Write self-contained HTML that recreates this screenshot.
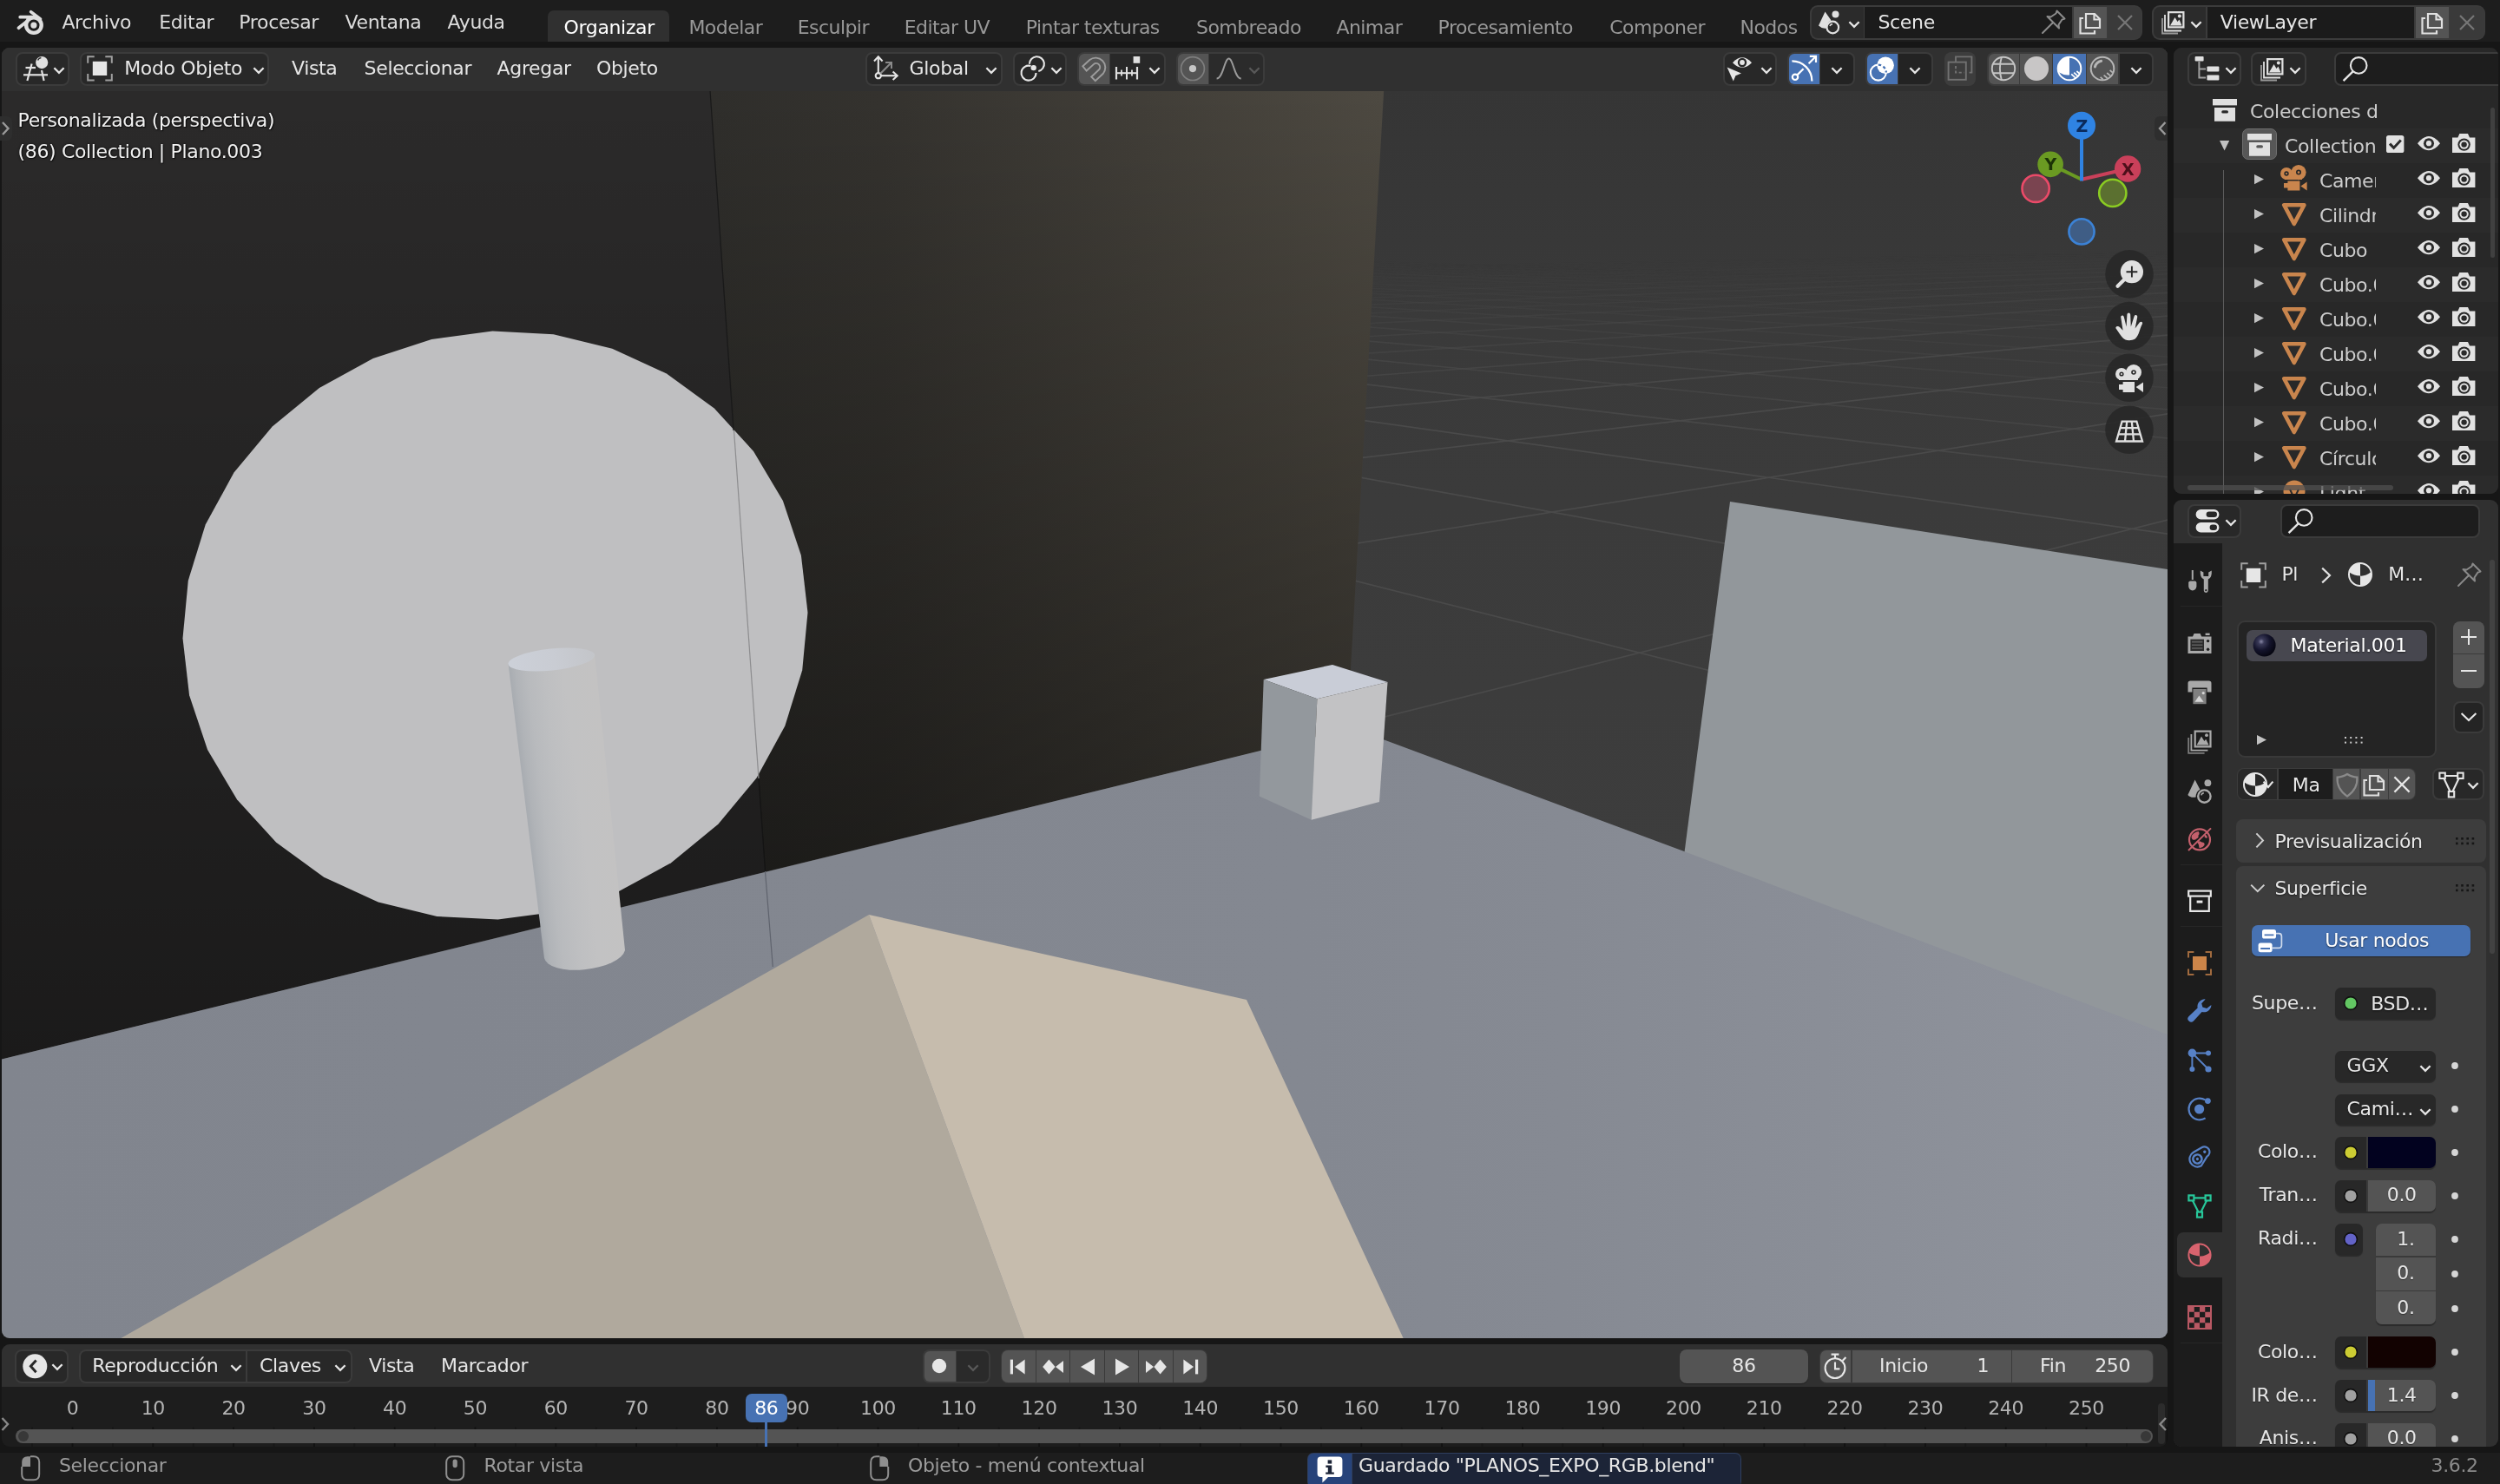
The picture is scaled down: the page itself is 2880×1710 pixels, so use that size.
<!DOCTYPE html>
<html lang="es"><head><meta charset="utf-8"><title>Blender</title>
<style>

html,body{margin:0;padding:0;}
body{width:2880px;height:1710px;overflow:hidden;background:#161616;position:relative;
 font-family:"DejaVu Sans","Liberation Sans",sans-serif;font-size:22px;color:#e6e6e6;letter-spacing:-0.35px;}
#root{position:absolute;left:0;top:0;width:2880px;height:1710px;overflow:hidden;will-change:transform;}
.abs{position:absolute;}
.t{position:absolute;white-space:nowrap;line-height:26px;height:26px;}
.btn{position:absolute;box-sizing:border-box;background:#282828;border:1px solid #3d3d3d;border-radius:8px;}
svg{position:absolute;overflow:visible;}

#topbar{position:absolute;left:0;top:0;width:2880px;height:48px;background:#1d1d1d;}
.menu{color:#dcdcdc;}
.ws{color:#989898;letter-spacing:-0.55px;}

#vp{position:absolute;left:2px;top:55px;width:2495px;height:1487px;border-radius:9px;overflow:hidden;background:#3a3a3a;}

#vhead{position:absolute;left:2px;top:55px;width:2495px;height:50px;background:#303030;border-radius:9px 9px 0 0;}

.ovt{color:#f2f2f2;text-shadow:0 0 3px rgba(0,0,0,.75),1px 1px 1px rgba(0,0,0,.6);}
.gz{font-family:"DejaVu Sans","Liberation Sans",sans-serif;font-weight:bold;font-size:19px;text-anchor:middle;}

#outl{position:absolute;left:2504px;top:55px;width:374px;height:514px;border-radius:9px;overflow:hidden;background:#282828;}
#outl .row{position:absolute;left:0;width:374px;height:40px;}
#outl .nm{position:absolute;white-space:nowrap;line-height:26px;height:30px;overflow:hidden;color:#cdcdcd;}

#props{position:absolute;left:2504px;top:576px;width:374px;height:1091px;border-radius:9px;overflow:hidden;background:#303030;}
#props .lbl{position:absolute;white-space:nowrap;line-height:26px;height:26px;text-align:right;width:120px;color:#e6e6e6;text-shadow:0 1px 1px rgba(0,0,0,.5);}
#props .val{position:absolute;white-space:nowrap;line-height:26px;height:26px;text-align:center;color:#e6e6e6;text-shadow:0 1px 1px rgba(0,0,0,.45);}
#props .pt{text-shadow:0 1px 2px rgba(0,0,0,.6);}

#tl{position:absolute;left:2px;top:1549px;width:2495px;height:118px;border-radius:9px;overflow:hidden;background:#1d1d1d;}
#tlh{position:absolute;left:0;top:0;width:2495px;height:49px;background:#303030;}
.num{position:absolute;white-space:nowrap;line-height:26px;height:26px;width:80px;text-align:center;color:#b4b4b4;}

#sb{position:absolute;left:0;top:1674px;width:2880px;height:36px;background:#1d1d1d;}
.st{color:#9b9b9b;}

</style></head>
<body>
<div id="root">
<div id="topbar"></div>
<svg style="left:16px;top:8px;" width="36" height="34" viewBox="0 0 36 34"><g fill="none" stroke="#dedede" stroke-width="3.7" stroke-linecap="round"><path d="M7.2,11.7 L21,11.7"/><path d="M19.6,5.6 L30.5,14"/><path d="M5.4,24.2 L15,16.6"/></g><polygon points="14,11.7 22,10 28,12 16,20" fill="#dedede"/><circle cx="22.9" cy="21.05" r="11" fill="#dedede"/><circle cx="22.9" cy="21.05" r="6.6" fill="#1d1d1d"/><circle cx="22.9" cy="21.05" r="3.6" fill="#dedede"/></svg>
<div class="t menu" style="left:71.4px;top:13px;">Archivo</div>
<div class="t menu" style="left:183.2px;top:13px;">Editar</div>
<div class="t menu" style="left:275.3px;top:13px;">Procesar</div>
<div class="t menu" style="left:397.5px;top:13px;">Ventana</div>
<div class="t menu" style="left:515.5px;top:13px;">Ayuda</div>
<div class="abs" style="left:631px;top:12px;width:140px;height:36px;background:#303030;border-radius:7px 7px 0 0;"></div>
<div class="t" style="left:649.5px;top:19px;color:#ffffff;">Organizar</div>
<div class="t ws" style="left:793.4px;top:19px;">Modelar</div>
<div class="t ws" style="left:918.7px;top:19px;">Esculpir</div>
<div class="t ws" style="left:1041.7px;top:19px;">Editar UV</div>
<div class="t ws" style="left:1181.7px;top:19px;">Pintar texturas</div>
<div class="t ws" style="left:1378.0px;top:19px;">Sombreado</div>
<div class="t ws" style="left:1539.4px;top:19px;">Animar</div>
<div class="t ws" style="left:1656.6px;top:19px;">Procesamiento</div>
<div class="t ws" style="left:1854.2px;top:19px;">Componer</div>
<div class="t ws" style="left:2004.5px;top:19px;">Nodos</div>
<div class="abs" style="left:2072px;top:0px;width:808px;height:48px;background:#1d1d1d;"></div>
<div class="abs" style="left:2085px;top:6px;width:383px;height:40px;background:#3b3b3b;border-radius:9px;"></div>
<div class="abs" style="left:2087px;top:8px;width:60px;height:36px;background:#2b2b2b;border-radius:7px 0 0 7px;"></div>
<div class="abs" style="left:2148px;top:8px;width:239px;height:36px;background:#1b1b1b;"></div>
<div class="abs" style="left:2389px;top:8px;width:38px;height:36px;background:#545454;"></div>
<div class="abs" style="left:2428px;top:8px;width:38px;height:36px;background:#3a3a3a;border-radius:0 7px 7px 0;"></div>
<svg style="left:2093px;top:10px;" width="32" height="32" viewBox="0 0 32 32"><path d="M9.5,3.5 L2,19.5 Q6,23.5 11.5,22.5 Q11,16 16.5,13.5 Z" fill="#e0e0e0"/><circle cx="21.5" cy="6.5" r="4" fill="#e0e0e0"/><circle cx="18.3" cy="21.5" r="6.8" fill="none" stroke="#e0e0e0" stroke-width="2.2"/><path d="M15,20 A3.6,3.6 0 0 1 18,17.6" fill="none" stroke="#e0e0e0" stroke-width="1.6"/></svg>
<svg style="left:2123.6px;top:16px;" width="24" height="24" viewBox="0 0 24 24"><path d="M6.4,9.2 L12,14.8 L17.6,9.2" fill="none" stroke="#e6e6e6" stroke-width="2.3" stroke-linecap="butt" stroke-linejoin="miter"/></svg>
<div class="t" style="left:2163.5px;top:13px;color:#e6e6e6;">Scene</div>
<svg style="left:2392px;top:10px;" width="32" height="32" viewBox="0 0 32 32"><g fill="none" stroke="#e0e0e0" stroke-width="2.2" stroke-linejoin="miter"><path d="M11,6 L21,6 L27,12 L27,22 L11,22 Z"/><path d="M20.5,6 L20.5,12.5 L27,12.5" /><path d="M8,11 L4.5,11 L4.5,28.5 L21,28.5 L21,25"/></g></svg>
<svg style="left:2432px;top:10px;" width="32" height="32" viewBox="0 0 32 32"><path d="M8,8 L24,24 M24,8 L8,24" stroke="#767676" stroke-width="2.2" fill="none"/></svg>
<svg style="left:2350px;top:9px;" width="32" height="32" viewBox="0 0 32 32"><g fill="none" stroke="#8c8c8c" stroke-width="2" stroke-linejoin="round" stroke-linecap="round"><path d="M19.5,3.5 L28.5,12.5 L25.5,13.5 L21.5,19.5 L22,23.5 L8.5,10 L12.5,10.5 L18.5,6.5 Z"/><path d="M14.5,17.5 L3,29"/></g></svg>
<div class="abs" style="left:2479px;top:6px;width:384px;height:40px;background:#3b3b3b;border-radius:9px;"></div>
<div class="abs" style="left:2481px;top:8px;width:60px;height:36px;background:#2b2b2b;border-radius:7px 0 0 7px;"></div>
<div class="abs" style="left:2543px;top:8px;width:238px;height:36px;background:#1b1b1b;"></div>
<div class="abs" style="left:2783px;top:8px;width:38px;height:36px;background:#545454;"></div>
<div class="abs" style="left:2822px;top:8px;width:39px;height:36px;background:#3a3a3a;border-radius:0 7px 7px 0;"></div>
<svg style="left:2488px;top:9.5px;" width="32" height="32" viewBox="0 0 32 32"><path d="M9,3 H28.5 V22.5 H9 Z M11.2,5.2 V20.3 H26.3 V5.2 Z" fill="#e0e0e0" fill-rule="evenodd"/><path d="M12,19.5 L17.5,10 L20.5,15 L22.5,12.5 L25.5,19.5 Z" fill="#e0e0e0"/><circle cx="22.8" cy="8.5" r="2" fill="#e0e0e0"/><path d="M6,7 V25.5 H25" fill="none" stroke="#e0e0e0" stroke-width="1.8"/><path d="M3,11 V28.5 H21" fill="none" stroke="#9a9a9a" stroke-width="1.8"/></svg>
<svg style="left:2517.8px;top:16px;" width="24" height="24" viewBox="0 0 24 24"><path d="M6.4,9.2 L12,14.8 L17.6,9.2" fill="none" stroke="#e6e6e6" stroke-width="2.3" stroke-linecap="butt" stroke-linejoin="miter"/></svg>
<div class="t" style="left:2557.7px;top:13px;color:#e6e6e6;">ViewLayer</div>
<svg style="left:2786px;top:10px;" width="32" height="32" viewBox="0 0 32 32"><g fill="none" stroke="#e0e0e0" stroke-width="2.2" stroke-linejoin="miter"><path d="M11,6 L21,6 L27,12 L27,22 L11,22 Z"/><path d="M20.5,6 L20.5,12.5 L27,12.5" /><path d="M8,11 L4.5,11 L4.5,28.5 L21,28.5 L21,25"/></g></svg>
<svg style="left:2826px;top:10px;" width="32" height="32" viewBox="0 0 32 32"><path d="M8,8 L24,24 M24,8 L8,24" stroke="#767676" stroke-width="2.2" fill="none"/></svg>

<div id="vp">
<svg style="left:-2px;top:-55px" width="2880" height="1710" viewBox="0 0 2880 1710">
<defs>
 <linearGradient id="gbg" gradientUnits="userSpaceOnUse" x1="0" y1="100" x2="0" y2="1000">
  <stop offset="0" stop-color="#353535"/><stop offset="0.2" stop-color="#383838"/><stop offset="0.3" stop-color="#3a3a3a"/><stop offset="1" stop-color="#3d3d3d"/>
 </linearGradient>
 <linearGradient id="gwall" gradientUnits="userSpaceOnUse" x1="820" y1="0" x2="1595" y2="0">
  <stop offset="0" stop-color="#2f2e2b"/><stop offset="0.25" stop-color="#34322e"/><stop offset="1" stop-color="#4d4941"/>
 </linearGradient>
 <linearGradient id="gwall2" gradientUnits="userSpaceOnUse" x1="0" y1="105" x2="0" y2="1220">
  <stop offset="0" stop-color="#000" stop-opacity="0"/><stop offset="1" stop-color="#000" stop-opacity="0.38"/>
 </linearGradient>
 <linearGradient id="gwall3" gradientUnits="userSpaceOnUse" x1="0" y1="105" x2="0" y2="1005">
  <stop offset="0" stop-color="#000" stop-opacity="0"/><stop offset="1" stop-color="#000" stop-opacity="0.43"/>
 </linearGradient>
 <linearGradient id="gfloor" gradientUnits="userSpaceOnUse" x1="0" y1="0" x2="2500" y2="0">
  <stop offset="0" stop-color="#81858e"/><stop offset="0.6" stop-color="#848891"/><stop offset="0.72" stop-color="#868a93"/><stop offset="0.96" stop-color="#8e929b"/><stop offset="1" stop-color="#8f939c"/>
 </linearGradient>
 <linearGradient id="gcyl" gradientUnits="userSpaceOnUse" x1="585.5" y1="765" x2="684.8" y2="752.8">
  <stop offset="0" stop-color="#a8acb1"/><stop offset="0.07" stop-color="#b0b3b7"/><stop offset="0.2" stop-color="#b8babd"/><stop offset="0.4" stop-color="#bebfc1"/><stop offset="0.62" stop-color="#c2c2c3"/><stop offset="1" stop-color="#c3c2c2"/>
 </linearGradient>
 <linearGradient id="gcyt" gradientUnits="userSpaceOnUse" x1="590" y1="760" x2="685" y2="752">
  <stop offset="0" stop-color="#ccd0d8"/><stop offset="0.5" stop-color="#c9ccd3"/><stop offset="1" stop-color="#c3c5c9"/>
 </linearGradient>
</defs>
<rect x="0" y="55" width="2500" height="1490" fill="url(#gbg)"/>
<g id="grid" stroke="#4a4a4a" stroke-width="1.7" fill="none"><line x1="1500" y1="850.0" x2="2500" y2="598.4" stroke-opacity="1.00"/><line x1="1500" y1="636.1" x2="2500" y2="476.5" stroke-opacity="1.00"/><line x1="1500" y1="535.5" x2="2500" y2="419.2" stroke-opacity="1.00"/><line x1="1500" y1="477.0" x2="2500" y2="385.8" stroke-opacity="0.89"/><line x1="1500" y1="438.8" x2="2500" y2="364.0" stroke-opacity="0.68"/><line x1="1500" y1="411.8" x2="2500" y2="348.7" stroke-opacity="0.53"/><line x1="1500" y1="391.8" x2="2500" y2="337.3" stroke-opacity="0.43"/><line x1="1500" y1="376.3" x2="2500" y2="328.5" stroke-opacity="0.35"/><line x1="1500" y1="364.1" x2="2500" y2="321.5" stroke-opacity="0.29"/><line x1="1500" y1="354.0" x2="2500" y2="315.7" stroke-opacity="0.24"/><line x1="1500" y1="345.7" x2="2500" y2="311.0" stroke-opacity="0.20"/><line x1="1500" y1="338.7" x2="2500" y2="307.0" stroke-opacity="0.16"/><line x1="1500" y1="332.7" x2="2500" y2="303.6" stroke-opacity="0.14"/><line x1="1500" y1="327.5" x2="2500" y2="300.6" stroke-opacity="0.11"/><line x1="1500" y1="323.0" x2="2500" y2="298.1" stroke-opacity="0.09"/><line x1="1500" y1="319.0" x2="2500" y2="295.8" stroke-opacity="0.07"/><line x1="1500" y1="315.5" x2="2500" y2="293.8" stroke-opacity="0.06"/><line x1="1500" y1="312.3" x2="2500" y2="292.0" stroke-opacity="0.04"/><line x1="1500" y1="309.5" x2="2500" y2="290.4" stroke-opacity="0.03"/><line x1="1500" y1="653.7" x2="2500" y2="907.1" stroke-opacity="1.00"/><line x1="1500" y1="538.1" x2="2500" y2="718.9" stroke-opacity="1.00"/><line x1="1500" y1="474.5" x2="2500" y2="615.5" stroke-opacity="1.00"/><line x1="1500" y1="434.4" x2="2500" y2="550.1" stroke-opacity="0.87"/><line x1="1500" y1="406.7" x2="2500" y2="505.1" stroke-opacity="0.68"/><line x1="1500" y1="386.5" x2="2500" y2="472.1" stroke-opacity="0.55"/><line x1="1500" y1="371.0" x2="2500" y2="447.0" stroke-opacity="0.45"/><line x1="1500" y1="358.8" x2="2500" y2="427.2" stroke-opacity="0.38"/><line x1="1500" y1="349.0" x2="2500" y2="411.2" stroke-opacity="0.32"/><line x1="1500" y1="340.9" x2="2500" y2="397.9" stroke-opacity="0.27"/><line x1="1500" y1="334.1" x2="2500" y2="386.8" stroke-opacity="0.23"/><line x1="1500" y1="328.3" x2="2500" y2="377.4" stroke-opacity="0.19"/><line x1="1500" y1="323.3" x2="2500" y2="369.3" stroke-opacity="0.16"/><line x1="1500" y1="318.9" x2="2500" y2="362.2" stroke-opacity="0.14"/><line x1="1500" y1="315.1" x2="2500" y2="356.0" stroke-opacity="0.12"/><line x1="1500" y1="311.7" x2="2500" y2="350.5" stroke-opacity="0.10"/><line x1="1500" y1="308.7" x2="2500" y2="345.6" stroke-opacity="0.08"/><line x1="1500" y1="306.0" x2="2500" y2="341.2" stroke-opacity="0.07"/><line x1="1500" y1="303.6" x2="2500" y2="337.2" stroke-opacity="0.05"/><line x1="1500" y1="301.4" x2="2500" y2="333.6" stroke-opacity="0.04"/><line x1="1500" y1="299.3" x2="2500" y2="330.3" stroke-opacity="0.03"/></g>
<!-- wall -->
<polygon points="0,55 815,55 882,1004.5 0,1221" fill="#2b2a2a"/>
<polygon points="814.5,55 1597,55 1552,841 881.5,1004.6" fill="url(#gwall)"/>
<polygon points="0,55 815,55 882,1004.5 0,1221" fill="url(#gwall2)"/>
<polygon points="814.5,55 1597,55 1552,841 881.5,1004.6" fill="url(#gwall3)"/>
<!-- right plane -->
<polygon points="1993,578 2500,656.5 2500,1200 1940,986" fill="#92979b"/>
<!-- floor -->
<polygon points="0,1221 1552,840.5 1552,837 1596,853 1940,981 2500,1193.2 2500,1545 0,1545" fill="url(#gfloor)"/>
<!-- disc -->
<polygon points="567.4,381.6 637.6,385.2 705.3,401.7 767.9,430.5 822.8,470.4 868.0,519.9 901.9,577.1 922.9,639.9 930.5,705.7 924.2,772.2 904.3,836.6 871.5,896.6 827.3,949.8 773.1,994.2 711.2,1028.1 643.8,1050.2 573.6,1059.6 503.4,1056.0 435.7,1039.5 373.1,1010.7 318.2,970.8 273.0,921.3 239.1,864.1 218.1,801.3 210.5,735.5 216.8,669.0 236.7,604.6 269.5,544.6 313.7,491.4 367.9,447.0 429.8,413.1 497.2,391.0" fill="#bfbfc1"/>
<!-- thin line -->
<line x1="818" y1="104" x2="845" y2="496" stroke="#191919" stroke-width="1.2"/>
<line x1="845.5" y1="496" x2="874" y2="897" stroke="#8d8d8f" stroke-width="1.2"/>
<line x1="874" y1="897" x2="881.5" y2="1004" stroke="#141414" stroke-width="1.2"/>
<line x1="881.5" y1="1004" x2="890.3" y2="1114" stroke="#5f636d" stroke-width="1.2"/>
<!-- cylinder -->
<path d="M585.5,765 L627,1104 A47,19.5 -7 0 0 720,1095 L685.2,755 Z" fill="url(#gcyl)"/>
<ellipse cx="635.4" cy="760" rx="50.2" ry="12.5" fill="url(#gcyt)" transform="rotate(-6 635.4 760)"/>
<!-- pyramid -->
<polygon points="1001,1054 134,1545 1181,1545" fill="#b0a99d"/>
<polygon points="1001,1054 1436,1152 1618,1545 1181,1545" fill="#c6bcad"/>
<!-- cube -->
<polygon points="1455.7,783 1535,766 1598.5,786 1517.4,805.3" fill="#c9cdd7"/>
<polygon points="1455.7,783 1517.4,805.3 1510.7,944.8 1450.8,917.6" fill="#93989d"/>
<polygon points="1517.4,805.3 1598.5,786 1589,924 1510.7,944.8" fill="#c2c2c4"/>
</svg>
</div>
<div id="vhead"></div>
<div class="abs" style="left:18px;top:60px;width:62px;height:39px;background:#282828;border:2px solid #3b3b3b;box-sizing:border-box;border-radius:8px;"></div>
<svg style="left:18px;top:60px;" width="40" height="40" viewBox="0 0 40 40"><circle cx="30.2" cy="12.1" r="7.1" fill="#e0e0e0"/><path d="M25.6,9.6 A4.6,4.6 0 0 1 29.4,6.6" fill="none" stroke="#282828" stroke-width="1.4"/><g stroke="#e0e0e0" stroke-width="2.2" fill="none"><path d="M9,26.3 H37"/><path d="M11.5,18 H23"/><path d="M18.6,13.5 L13.4,33"/><path d="M30,21 L32.6,33"/></g></svg>
<svg style="left:55.5px;top:69px;" width="24" height="24" viewBox="0 0 24 24"><path d="M6.4,9.2 L12,14.8 L17.6,9.2" fill="none" stroke="#e6e6e6" stroke-width="2.3" stroke-linecap="butt" stroke-linejoin="miter"/></svg>
<div class="abs" style="left:92px;top:60px;width:218px;height:39px;background:#282828;border:2px solid #3b3b3b;box-sizing:border-box;border-radius:8px;"></div>
<svg style="left:100px;top:64px;" width="30" height="30" viewBox="0 0 30 30"><path d="M1.2,8.7 V1.2 H8.7 M21.3,1.2 H28.8 V8.7 M28.8,21.1 V28.6 H21.3 M8.7,28.6 H1.2 V21.1" fill="none" stroke="#a0a0a0" stroke-width="2"/><rect x="6.8" y="6.8" width="16.4" height="16.2" fill="#e6e6e6"/></svg>
<div class="t" style="left:143.2px;top:66px;">Modo Objeto</div>
<svg style="left:285.8px;top:69px;" width="24" height="24" viewBox="0 0 24 24"><path d="M6.4,9.2 L12,14.8 L17.6,9.2" fill="none" stroke="#e6e6e6" stroke-width="2.3" stroke-linecap="butt" stroke-linejoin="miter"/></svg>
<div class="t" style="left:336.0px;top:66px;">Vista</div>
<div class="t" style="left:419.6px;top:66px;">Seleccionar</div>
<div class="t" style="left:572.6px;top:66px;">Agregar</div>
<div class="t" style="left:687.0px;top:66px;">Objeto</div>
<div class="abs" style="left:997px;top:60px;width:158px;height:39px;background:#282828;border:2px solid #3b3b3b;box-sizing:border-box;border-radius:8px;"></div>
<svg style="left:1004px;top:63px;" width="32" height="32" viewBox="0 0 32 32"><g fill="none" stroke="#e6e6e6" stroke-width="2.1" stroke-linejoin="miter"><circle cx="7.8" cy="24.2" r="3.1"/><path d="M7.8,21 V2.5"/><path d="M3,7.5 L7.8,2.4 L12.6,7.5"/><path d="M11,24.2 H29.5"/><path d="M24.6,19.4 L29.7,24.2 L24.6,29"/></g><g fill="none" stroke="#8a8a8a" stroke-width="2"><path d="M10.2,21.8 L22.5,9.5"/><path d="M16,9 H23 V16"/></g></svg>
<div class="t" style="left:1047.6px;top:66px;">Global</div>
<svg style="left:1130.4px;top:69px;" width="24" height="24" viewBox="0 0 24 24"><path d="M6.4,9.2 L12,14.8 L17.6,9.2" fill="none" stroke="#e6e6e6" stroke-width="2.3" stroke-linecap="butt" stroke-linejoin="miter"/></svg>
<div class="abs" style="left:1167px;top:60px;width:62px;height:39px;background:#282828;border:2px solid #3b3b3b;box-sizing:border-box;border-radius:8px;"></div>
<svg style="left:1174px;top:63px;" width="32" height="32" viewBox="0 0 32 32"><g fill="none" stroke="#e6e6e6" stroke-width="2.1"><path d="M11.9,10.7 A8.5,8.5 0 1 1 22.3,19"/><path d="M19.5,21.1 A8.5,8.5 0 1 1 13.5,13"/></g><circle cx="16.7" cy="15.1" r="3.2" fill="#e6e6e6"/></svg>
<svg style="left:1204.5px;top:69px;" width="24" height="24" viewBox="0 0 24 24"><path d="M6.4,9.2 L12,14.8 L17.6,9.2" fill="none" stroke="#e6e6e6" stroke-width="2.3" stroke-linecap="butt" stroke-linejoin="miter"/></svg>
<div class="abs" style="left:1241px;top:60px;width:102px;height:39px;background:#3b3b3b;border-radius:8px;"></div>
<div class="abs" style="left:1243px;top:62px;width:35px;height:35px;background:#545454;border-radius:6px 0 0 6px;"></div>
<div class="abs" style="left:1279px;top:62px;width:62px;height:35px;background:#282828;border-radius:0 6px 6px 0;"></div>
<svg style="left:1244px;top:63px;" width="32" height="32" viewBox="0 0 32 32"><path transform="translate(0.6,2.6) scale(0.93)" d="M3,11.5 L11.5,3.6 A12,12 0 0 1 28.2,20.6 L18.5,29.6 L13.6,24.6 L22.8,16 A4.6,4.6 0 0 0 16.4,9.2 L7.6,17.2 Z" fill="none" stroke="#9c9c9c" stroke-width="2.1" stroke-linejoin="miter"/></svg>
<svg style="left:1284px;top:63px;" width="32" height="32" viewBox="0 0 32 32"><rect x="21.6" y="2" width="7.6" height="7.8" fill="#e0e0e0"/><g stroke="#e0e0e0" fill="none"><path d="M1,21.2 H27" stroke-width="2"/><path d="M2,14 V28.5 M26,14 V28.5" stroke-width="2.2"/><path d="M14,14 V28.5" stroke-width="2"/><path d="M8,17.5 V24.5 M20,17.5 V24.5" stroke-width="1.8"/></g></svg>
<svg style="left:1318.4px;top:69px;" width="24" height="24" viewBox="0 0 24 24"><path d="M6.4,9.2 L12,14.8 L17.6,9.2" fill="none" stroke="#e6e6e6" stroke-width="2.3" stroke-linecap="butt" stroke-linejoin="miter"/></svg>
<div class="abs" style="left:1355px;top:60px;width:102px;height:39px;background:#3b3b3b;border-radius:8px;"></div>
<div class="abs" style="left:1357px;top:62px;width:35px;height:35px;background:#545454;border-radius:6px 0 0 6px;"></div>
<div class="abs" style="left:1393px;top:62px;width:62px;height:35px;background:#2b2b2b;border-radius:0 6px 6px 0;"></div>
<svg style="left:1358px;top:63px;" width="32" height="32" viewBox="0 0 32 32"><circle cx="16" cy="16.1" r="13.4" fill="none" stroke="#7e7e7e" stroke-width="1.7"/><circle cx="16" cy="16.1" r="4.1" fill="#c6c6c6"/></svg>
<svg style="left:1400px;top:63px;" width="32" height="32" viewBox="0 0 32 32"><path d="M1.6,27.6 C9,27.6 10.5,4.6 15.6,4.6 C20.7,4.6 22.2,27.6 29.7,27.6" fill="none" stroke="#9a9a9a" stroke-width="2"/></svg>
<svg style="left:1432.8px;top:69px;" width="24" height="24" viewBox="0 0 24 24"><path d="M6.4,9.2 L12,14.8 L17.6,9.2" fill="none" stroke="#585858" stroke-width="2.3" stroke-linecap="butt" stroke-linejoin="miter"/></svg>
<div class="abs" style="left:1985px;top:60px;width:62px;height:39px;background:#282828;border:2px solid #3b3b3b;box-sizing:border-box;border-radius:8px;"></div>
<svg style="left:1986px;top:62px;" width="34" height="34" viewBox="0 0 34 34"><path d="M10,10.2 Q21,-1.5 32,10.2 Q21,21.5 10,10.2 Z" fill="#e6e6e6"/><circle cx="21" cy="10" r="5.2" fill="#282828"/><circle cx="21" cy="10" r="2.9" fill="#e6e6e6"/><path d="M3.6,15.4 L20,22.6 L13.4,25.2 L10.8,31.4 Z" fill="#e6e6e6"/></svg>
<svg style="left:2022.5px;top:69px;" width="24" height="24" viewBox="0 0 24 24"><path d="M6.4,9.2 L12,14.8 L17.6,9.2" fill="none" stroke="#e6e6e6" stroke-width="2.3" stroke-linecap="butt" stroke-linejoin="miter"/></svg>
<div class="abs" style="left:2059px;top:60px;width:78px;height:39px;background:#3b3b3b;border-radius:8px;"></div>
<div class="abs" style="left:2061px;top:62px;width:35px;height:35px;background:#4772b3;border-radius:6px 0 0 6px;"></div>
<div class="abs" style="left:2097px;top:62px;width:38px;height:35px;background:#232323;border-radius:0 6px 6px 0;"></div>
<svg style="left:2060px;top:60px;" width="38" height="38" viewBox="0 0 38 38"><g fill="none" stroke="#ffffff" stroke-width="2.2"><path d="M4.4,10.4 A23,23 0 0 1 27.4,33.4"/><circle cx="8" cy="28.8" r="3.2"/><path d="M10.4,26.4 L17.6,19.2"/><path d="M23.6,13.2 L31.6,5.2"/><path d="M24.8,4.8 H32 V12"/></g></svg>
<svg style="left:2104.2px;top:69px;" width="24" height="24" viewBox="0 0 24 24"><path d="M6.4,9.2 L12,14.8 L17.6,9.2" fill="none" stroke="#e6e6e6" stroke-width="2.3" stroke-linecap="butt" stroke-linejoin="miter"/></svg>
<div class="abs" style="left:2149px;top:60px;width:78px;height:39px;background:#3b3b3b;border-radius:8px;"></div>
<div class="abs" style="left:2151px;top:62px;width:35px;height:35px;background:#4772b3;border-radius:6px 0 0 6px;"></div>
<div class="abs" style="left:2187px;top:62px;width:38px;height:35px;background:#232323;border-radius:0 6px 6px 0;"></div>
<svg style="left:2150px;top:60px;" width="38" height="38" viewBox="0 0 38 38"><circle cx="22.1" cy="15.3" r="9.8" fill="#ffffff"/><circle cx="13.8" cy="23.6" r="9" fill="none" stroke="#ffffff" stroke-width="2.1"/><path d="M13.8,14.6 A9,9 0 0 1 22.8,23.6" fill="none" stroke="#4772b3" stroke-width="2.3" stroke-dasharray="3.4 2.6"/></svg>
<svg style="left:2194.2px;top:69px;" width="24" height="24" viewBox="0 0 24 24"><path d="M6.4,9.2 L12,14.8 L17.6,9.2" fill="none" stroke="#e6e6e6" stroke-width="2.3" stroke-linecap="butt" stroke-linejoin="miter"/></svg>
<div class="abs" style="left:2240px;top:60px;width:36px;height:39px;background:#3d3d3d;border-radius:8px;"></div>
<svg style="left:2242px;top:62px;" width="32" height="36" viewBox="0 0 32 36"><g fill="none" stroke="#717171" stroke-width="1.9"><rect x="2.6" y="9.6" width="20.2" height="20.2"/><path d="M11,9.6 V3.4 H29.4 V21.6 H26.6"/><path d="M11,14 V21.6 H20.6" stroke-dasharray="3.2 2.4"/></g></svg>
<div class="abs" style="left:2289px;top:60px;width:192px;height:39px;background:#3b3b3b;border-radius:8px;"></div>
<div class="abs" style="left:2291px;top:62px;width:35px;height:35px;background:#545454;border-radius:6px 0 0 6px;"></div>
<div class="abs" style="left:2327px;top:62px;width:37px;height:35px;background:#545454;"></div>
<div class="abs" style="left:2365px;top:62px;width:38px;height:35px;background:#4772b3;"></div>
<div class="abs" style="left:2404px;top:62px;width:36px;height:35px;background:#545454;"></div>
<div class="abs" style="left:2442px;top:62px;width:37px;height:35px;background:#232323;border-radius:0 6px 6px 0;"></div>
<svg style="left:2292px;top:63px;" width="32" height="32" viewBox="-16 -16 32 32"><g fill="none" stroke="#c4c4c4" stroke-width="1.9"><circle cx="0" cy="0" r="13.2"/><path d="M-12.2,-5.2 H12.2 M-12.2,5.2 H12.2"/><path d="M-2.2,-13 Q-6,0 -2.2,13"/></g></svg>
<svg style="left:2329.9px;top:63px;" width="32" height="32" viewBox="-16 -16 32 32"><circle cx="0" cy="0" r="14" fill="#c8c6c6"/></svg>
<svg style="left:2367.9px;top:63px;" width="32" height="32" viewBox="-16 -16 32 32"><circle cx="0" cy="0" r="13.3" fill="none" stroke="#ffffff" stroke-width="2"/><path d="M0,-13 A13,13 0 0 0 -12.3,4.2 Q-6,8.2 0,7.4 Z" fill="#ffffff"/><path d="M-12.3,4.2 Q-5,8.6 1,7.2 L9.4,13.4 L13.4,5 L12.8,3 L1,3 Z" fill="none"/><g stroke="#ffffff" stroke-width="1.7"><path d="M2.2,6.4 L7.6,11.4 M5.2,4.6 L10.4,9.4 M8.4,3 L12.4,6.6"/></g></svg>
<svg style="left:2405.9px;top:63px;" width="32" height="32" viewBox="-16 -16 32 32"><circle cx="0" cy="0" r="13.3" fill="none" stroke="#b6b6b6" stroke-width="2"/><path d="M-8.6,-2 A9.4,9.4 0 0 1 -1.4,-8.8" fill="none" stroke="#b6b6b6" stroke-width="3" stroke-linecap="round"/><g stroke="#b6b6b6" stroke-width="1.7"><path d="M-2.4,9.8 L0.6,12.4 M1.6,7.6 L5.6,11 M5.2,5 L9.2,8.4 M8.6,1.8 L11.8,4.6"/></g></svg>
<svg style="left:2448.6px;top:69px;" width="24" height="24" viewBox="0 0 24 24"><path d="M6.4,9.2 L12,14.8 L17.6,9.2" fill="none" stroke="#e6e6e6" stroke-width="2.3" stroke-linecap="butt" stroke-linejoin="miter"/></svg>
<div class="t ovt" style="left:20.5px;top:126px;">Personalizada (perspectiva)</div>
<div class="t ovt" style="left:20.5px;top:162px;">(86) Collection | Plano.003</div>
<div class="abs" style="left:0px;top:134px;width:14px;height:28px;background:#2e2e2e;border-radius:0 6px 6px 0;"></div>
<svg style="left:0px;top:136px;" width="14" height="24" viewBox="0 0 14 24"><path d="M3,5 L9.5,12 L3,19" fill="none" stroke="#9a9a9a" stroke-width="2.4"/></svg>
<div class="abs" style="left:2482px;top:134px;width:15px;height:28px;background:#2e2e2e;border-radius:6px 0 0 6px;"></div>
<svg style="left:2483px;top:136px;" width="14" height="24" viewBox="0 0 14 24"><path d="M11.5,5 L5,12 L11.5,19" fill="none" stroke="#9a9a9a" stroke-width="2.4"/></svg>
<svg style="left:0px;top:0px;" width="2880" height="400" viewBox="0 0 2880 400">
<line x1="2398" y1="206.7" x2="2451.1" y2="194.5" stroke="#c9405a" stroke-width="4"/>
<line x1="2398" y1="206.7" x2="2362.1" y2="189.4" stroke="#6a9a22" stroke-width="4"/>
<line x1="2398" y1="208.5" x2="2398" y2="144.8" stroke="#2f83e3" stroke-width="4"/>
<circle cx="2345.1" cy="217.3" r="15.6" fill="#7a4450" stroke="#ea4a68" stroke-width="2.6"/>
<circle cx="2433.8" cy="222.4" r="15.6" fill="#5b7030" stroke="#8acb22" stroke-width="2.6"/>
<circle cx="2398" cy="266.9" r="14.6" fill="#3f5d85" stroke="#3b82d6" stroke-width="2.6"/>
<circle cx="2362.1" cy="189.4" r="14.8" fill="#6a9a22"/>
<circle cx="2451.1" cy="194.5" r="15.2" fill="#c9405a"/>
<circle cx="2398" cy="144.8" r="16" fill="#2f83e3"/>
<text class="gz" x="2398.3" y="151.8" fill="#0a2a5c" style="letter-spacing:0">Z</text>
<text class="gz" x="2362.3" y="196.4" fill="#1b3306" style="letter-spacing:0">Y</text>
<text class="gz" x="2451.3" y="201.5" fill="#4c0f1a" style="letter-spacing:0">X</text>
</svg>
<svg style="left:0px;top:0px;" width="2880" height="600" viewBox="0 0 2880 600"><circle cx="2453" cy="315.9" r="27.8" fill="#282828" fill-opacity="0.92"/><circle cx="2453" cy="375.6" r="27.8" fill="#282828" fill-opacity="0.92"/><circle cx="2453" cy="435.2" r="27.8" fill="#282828" fill-opacity="0.92"/><circle cx="2453" cy="495.2" r="27.8" fill="#282828" fill-opacity="0.92"/><circle cx="2455.9" cy="313.2" r="13.1" fill="#e0e0e0"/><path d="M2449.5,313.2 H2462.3 M2455.9,306.8 V319.6" stroke="#282828" stroke-width="1.9"/><path d="M2447,322.2 L2439.5,329.7" stroke="#e0e0e0" stroke-width="4.2" stroke-linecap="round"/><g transform="translate(2437,360)" fill="#e0e0e0"><path d="M11.5,31.5 C7,29 4.5,24 0.3,18 C0.5,15.6 3.4,15.4 5.2,17.2 L8.6,20.8 L6.2,5.6 C6,3 9.2,2.6 9.8,5.2 L12.6,16.6 L13.4,2.6 C13.6,-0.2 17,-0.2 17.2,2.6 L17.8,16.6 L21.6,4.4 C22.6,1.8 25.8,2.8 25.2,5.6 L22.6,18.4 L27.8,11.6 C29.6,9.6 32,11.2 30.8,13.6 C27.6,19.6 27.6,26 22.6,30.6 C19,32.6 14.6,32.8 11.5,31.5 Z"/></g><g transform="translate(2437,420)" fill="#e0e0e0"><circle cx="7" cy="11" r="7"/><circle cx="21" cy="9" r="9"/><rect x="4" y="12" width="22" height="6"/><circle cx="7" cy="11" r="2.6" fill="#282828"/><circle cx="21" cy="9" r="2.8" fill="#282828"/><circle cx="7" cy="11" r="1.1"/><circle cx="21" cy="9" r="1.2"/><path d="M8.6,20 H22 V32 H8.6 Z"/><path d="M4,23 H9 V29 H4 Z"/><path d="M23.6,26 L32,20.6 V32 Z"/></g><g transform="translate(2437,484.5)" fill="none" stroke="#e0e0e0" stroke-width="2.3"><path d="M7.6,1.2 H24.4 L31,24 H1 Z"/><path d="M5.4,8.6 H26.6 M3.4,15.8 H28.6"/><path d="M13.2,1.2 L11,24 M18.8,1.2 L21,24"/></g></svg>
<div id="outl"><div class="row" style="top:53px;background:#282828"></div>
<svg style="left:45px;top:59.2px;" width="28" height="26" viewBox="0 0 28 26"><rect x="0" y="0" width="28" height="7.4" fill="#e0e0e0"/><path d="M2,10 H26 V25.8 H2 Z" fill="#e0e0e0"/><rect x="10.2" y="13.2" width="7.8" height="3.4" rx="1.7" fill="#282828"/></svg>
<div class="nm" style="left:88.0px;top:61px;width:145.5px">Colecciones d</div>
<div class="row" style="top:93px;background:#2b2b2b"></div>
<svg style="left:52.69999999999982px;top:107.19999999999999px;" width="12" height="12" viewBox="0 0 12 12"><path d="M0,0 H11.2 L5.6,11.4 Z" fill="#c2c2c2"/></svg>
<div class="abs" style="left:79px;top:93px;width:40px;height:36px;background:#575757;border:1px solid #6e6e6e;box-sizing:border-box;border-radius:7px;"></div>
<svg style="left:85px;top:99px;" width="28" height="26" viewBox="0 0 28 26"><rect x="0" y="0" width="28" height="7.4" fill="#e0e0e0"/><path d="M2,10 H26 V25.8 H2 Z" fill="#e0e0e0"/><rect x="10.2" y="13.2" width="7.8" height="3.4" rx="1.7" fill="#575757"/></svg>
<svg style="left:244.69999999999982px;top:101px;" width="21" height="20" viewBox="0 0 21 20"><rect x="0" y="0" width="20.4" height="20" rx="2.6" fill="#e2e2e2"/><path d="M4,9.6 L8.6,14.4 L16.8,5.6" fill="none" stroke="#2b2b2b" stroke-width="3"/></svg>
<svg style="left:280.8000000000002px;top:100.80000000000001px;" width="26" height="19" viewBox="0 0 26 19"><path d="M0,9.2 Q13,-7 26,9.2 Q13,25.4 0,9.2 Z" fill="#e2e2e2"/><circle cx="13" cy="9.2" r="6" fill="#2b2b2b"/><circle cx="13" cy="9.2" r="3.1" fill="#e2e2e2"/></svg>
<svg style="left:320.6999999999998px;top:98.69999999999999px;" width="27" height="22" viewBox="0 0 27 22"><path d="M0,4.4 H6.4 L8.4,0 H18 L20,4.4 H26.4 V22 H0 Z" fill="#e2e2e2"/><circle cx="13.6" cy="12.6" r="7.2" fill="#2b2b2b"/><circle cx="13.6" cy="12.6" r="5.2" fill="#e2e2e2"/><circle cx="13.6" cy="12.6" r="3.2" fill="#2b2b2b"/></svg>
<div class="nm" style="left:128.0px;top:101px;width:105.5px">Collection</div>
<div class="row" style="top:133px;background:#282828"></div>
<svg style="left:93px;top:146px;" width="12" height="12" viewBox="0 0 12 12"><path d="M0,0 L11,5.6 L0,11.2 Z" fill="#c2c2c2"/></svg>
<svg style="left:122.59999999999991px;top:135.4px;" width="31" height="30" viewBox="0 0 31 30"><circle cx="7" cy="10" r="7" fill="#c9854d"/><circle cx="21" cy="8.6" r="8.6" fill="#c9854d"/><rect x="5" y="10" width="20" height="7" fill="#c9854d"/><circle cx="7" cy="10" r="2.7" fill="#282828"/><circle cx="21" cy="8.6" r="3" fill="#282828"/><circle cx="7" cy="10" r="1.1" fill="#c9854d"/><circle cx="21" cy="8.6" r="1.3" fill="#c9854d"/><path d="M8.4,18.6 H22.4 V29.6 H8.4 Z" fill="#c9854d"/><path d="M4,21 H9 V26.6 H4 Z" fill="#c9854d"/><path d="M23.4,24.4 L30.6,19.6 V29.6 Z" fill="#c9854d"/></svg>
<svg style="left:280.8000000000002px;top:140.8px;" width="26" height="19" viewBox="0 0 26 19"><path d="M0,9.2 Q13,-7 26,9.2 Q13,25.4 0,9.2 Z" fill="#e2e2e2"/><circle cx="13" cy="9.2" r="6" fill="#282828"/><circle cx="13" cy="9.2" r="3.1" fill="#e2e2e2"/></svg>
<svg style="left:320.6999999999998px;top:138.7px;" width="27" height="22" viewBox="0 0 27 22"><path d="M0,4.4 H6.4 L8.4,0 H18 L20,4.4 H26.4 V22 H0 Z" fill="#e2e2e2"/><circle cx="13.6" cy="12.6" r="7.2" fill="#282828"/><circle cx="13.6" cy="12.6" r="5.2" fill="#e2e2e2"/><circle cx="13.6" cy="12.6" r="3.2" fill="#282828"/></svg>
<div class="nm" style="left:167.9px;top:141px;width:65.6px">Camera</div>
<div class="row" style="top:173px;background:#2b2b2b"></div>
<svg style="left:93px;top:186px;" width="12" height="12" viewBox="0 0 12 12"><path d="M0,0 L11,5.6 L0,11.2 Z" fill="#c2c2c2"/></svg>
<svg style="left:124px;top:178px;" width="30" height="28" viewBox="0 0 30 28"><path d="M3.2,3.2 H26.4 L14.8,25 Z" fill="none" stroke="#c9854d" stroke-width="4.6" stroke-linejoin="round"/></svg>
<svg style="left:280.8000000000002px;top:180.8px;" width="26" height="19" viewBox="0 0 26 19"><path d="M0,9.2 Q13,-7 26,9.2 Q13,25.4 0,9.2 Z" fill="#e2e2e2"/><circle cx="13" cy="9.2" r="6" fill="#2b2b2b"/><circle cx="13" cy="9.2" r="3.1" fill="#e2e2e2"/></svg>
<svg style="left:320.6999999999998px;top:178.7px;" width="27" height="22" viewBox="0 0 27 22"><path d="M0,4.4 H6.4 L8.4,0 H18 L20,4.4 H26.4 V22 H0 Z" fill="#e2e2e2"/><circle cx="13.6" cy="12.6" r="7.2" fill="#2b2b2b"/><circle cx="13.6" cy="12.6" r="5.2" fill="#e2e2e2"/><circle cx="13.6" cy="12.6" r="3.2" fill="#2b2b2b"/></svg>
<div class="nm" style="left:167.9px;top:181px;width:65.6px">Cilindro</div>
<div class="row" style="top:213px;background:#282828"></div>
<svg style="left:93px;top:226px;" width="12" height="12" viewBox="0 0 12 12"><path d="M0,0 L11,5.6 L0,11.2 Z" fill="#c2c2c2"/></svg>
<svg style="left:124px;top:218px;" width="30" height="28" viewBox="0 0 30 28"><path d="M3.2,3.2 H26.4 L14.8,25 Z" fill="none" stroke="#c9854d" stroke-width="4.6" stroke-linejoin="round"/></svg>
<svg style="left:280.8000000000002px;top:220.8px;" width="26" height="19" viewBox="0 0 26 19"><path d="M0,9.2 Q13,-7 26,9.2 Q13,25.4 0,9.2 Z" fill="#e2e2e2"/><circle cx="13" cy="9.2" r="6" fill="#282828"/><circle cx="13" cy="9.2" r="3.1" fill="#e2e2e2"/></svg>
<svg style="left:320.6999999999998px;top:218.7px;" width="27" height="22" viewBox="0 0 27 22"><path d="M0,4.4 H6.4 L8.4,0 H18 L20,4.4 H26.4 V22 H0 Z" fill="#e2e2e2"/><circle cx="13.6" cy="12.6" r="7.2" fill="#282828"/><circle cx="13.6" cy="12.6" r="5.2" fill="#e2e2e2"/><circle cx="13.6" cy="12.6" r="3.2" fill="#282828"/></svg>
<div class="nm" style="left:167.9px;top:221px;width:65.6px">Cubo</div>
<div class="row" style="top:253px;background:#2b2b2b"></div>
<svg style="left:93px;top:266px;" width="12" height="12" viewBox="0 0 12 12"><path d="M0,0 L11,5.6 L0,11.2 Z" fill="#c2c2c2"/></svg>
<svg style="left:124px;top:258px;" width="30" height="28" viewBox="0 0 30 28"><path d="M3.2,3.2 H26.4 L14.8,25 Z" fill="none" stroke="#c9854d" stroke-width="4.6" stroke-linejoin="round"/></svg>
<svg style="left:280.8000000000002px;top:260.8px;" width="26" height="19" viewBox="0 0 26 19"><path d="M0,9.2 Q13,-7 26,9.2 Q13,25.4 0,9.2 Z" fill="#e2e2e2"/><circle cx="13" cy="9.2" r="6" fill="#2b2b2b"/><circle cx="13" cy="9.2" r="3.1" fill="#e2e2e2"/></svg>
<svg style="left:320.6999999999998px;top:258.7px;" width="27" height="22" viewBox="0 0 27 22"><path d="M0,4.4 H6.4 L8.4,0 H18 L20,4.4 H26.4 V22 H0 Z" fill="#e2e2e2"/><circle cx="13.6" cy="12.6" r="7.2" fill="#2b2b2b"/><circle cx="13.6" cy="12.6" r="5.2" fill="#e2e2e2"/><circle cx="13.6" cy="12.6" r="3.2" fill="#2b2b2b"/></svg>
<div class="nm" style="left:167.9px;top:261px;width:65.6px">Cubo.001</div>
<div class="row" style="top:293px;background:#282828"></div>
<svg style="left:93px;top:306px;" width="12" height="12" viewBox="0 0 12 12"><path d="M0,0 L11,5.6 L0,11.2 Z" fill="#c2c2c2"/></svg>
<svg style="left:124px;top:298px;" width="30" height="28" viewBox="0 0 30 28"><path d="M3.2,3.2 H26.4 L14.8,25 Z" fill="none" stroke="#c9854d" stroke-width="4.6" stroke-linejoin="round"/></svg>
<svg style="left:280.8000000000002px;top:300.8px;" width="26" height="19" viewBox="0 0 26 19"><path d="M0,9.2 Q13,-7 26,9.2 Q13,25.4 0,9.2 Z" fill="#e2e2e2"/><circle cx="13" cy="9.2" r="6" fill="#282828"/><circle cx="13" cy="9.2" r="3.1" fill="#e2e2e2"/></svg>
<svg style="left:320.6999999999998px;top:298.7px;" width="27" height="22" viewBox="0 0 27 22"><path d="M0,4.4 H6.4 L8.4,0 H18 L20,4.4 H26.4 V22 H0 Z" fill="#e2e2e2"/><circle cx="13.6" cy="12.6" r="7.2" fill="#282828"/><circle cx="13.6" cy="12.6" r="5.2" fill="#e2e2e2"/><circle cx="13.6" cy="12.6" r="3.2" fill="#282828"/></svg>
<div class="nm" style="left:167.9px;top:301px;width:65.6px">Cubo.002</div>
<div class="row" style="top:333px;background:#2b2b2b"></div>
<svg style="left:93px;top:346px;" width="12" height="12" viewBox="0 0 12 12"><path d="M0,0 L11,5.6 L0,11.2 Z" fill="#c2c2c2"/></svg>
<svg style="left:124px;top:338px;" width="30" height="28" viewBox="0 0 30 28"><path d="M3.2,3.2 H26.4 L14.8,25 Z" fill="none" stroke="#c9854d" stroke-width="4.6" stroke-linejoin="round"/></svg>
<svg style="left:280.8000000000002px;top:340.8px;" width="26" height="19" viewBox="0 0 26 19"><path d="M0,9.2 Q13,-7 26,9.2 Q13,25.4 0,9.2 Z" fill="#e2e2e2"/><circle cx="13" cy="9.2" r="6" fill="#2b2b2b"/><circle cx="13" cy="9.2" r="3.1" fill="#e2e2e2"/></svg>
<svg style="left:320.6999999999998px;top:338.7px;" width="27" height="22" viewBox="0 0 27 22"><path d="M0,4.4 H6.4 L8.4,0 H18 L20,4.4 H26.4 V22 H0 Z" fill="#e2e2e2"/><circle cx="13.6" cy="12.6" r="7.2" fill="#2b2b2b"/><circle cx="13.6" cy="12.6" r="5.2" fill="#e2e2e2"/><circle cx="13.6" cy="12.6" r="3.2" fill="#2b2b2b"/></svg>
<div class="nm" style="left:167.9px;top:341px;width:65.6px">Cubo.003</div>
<div class="row" style="top:373px;background:#282828"></div>
<svg style="left:93px;top:386px;" width="12" height="12" viewBox="0 0 12 12"><path d="M0,0 L11,5.6 L0,11.2 Z" fill="#c2c2c2"/></svg>
<svg style="left:124px;top:378px;" width="30" height="28" viewBox="0 0 30 28"><path d="M3.2,3.2 H26.4 L14.8,25 Z" fill="none" stroke="#c9854d" stroke-width="4.6" stroke-linejoin="round"/></svg>
<svg style="left:280.8000000000002px;top:380.8px;" width="26" height="19" viewBox="0 0 26 19"><path d="M0,9.2 Q13,-7 26,9.2 Q13,25.4 0,9.2 Z" fill="#e2e2e2"/><circle cx="13" cy="9.2" r="6" fill="#282828"/><circle cx="13" cy="9.2" r="3.1" fill="#e2e2e2"/></svg>
<svg style="left:320.6999999999998px;top:378.7px;" width="27" height="22" viewBox="0 0 27 22"><path d="M0,4.4 H6.4 L8.4,0 H18 L20,4.4 H26.4 V22 H0 Z" fill="#e2e2e2"/><circle cx="13.6" cy="12.6" r="7.2" fill="#282828"/><circle cx="13.6" cy="12.6" r="5.2" fill="#e2e2e2"/><circle cx="13.6" cy="12.6" r="3.2" fill="#282828"/></svg>
<div class="nm" style="left:167.9px;top:381px;width:65.6px">Cubo.004</div>
<div class="row" style="top:413px;background:#2b2b2b"></div>
<svg style="left:93px;top:426px;" width="12" height="12" viewBox="0 0 12 12"><path d="M0,0 L11,5.6 L0,11.2 Z" fill="#c2c2c2"/></svg>
<svg style="left:124px;top:418px;" width="30" height="28" viewBox="0 0 30 28"><path d="M3.2,3.2 H26.4 L14.8,25 Z" fill="none" stroke="#c9854d" stroke-width="4.6" stroke-linejoin="round"/></svg>
<svg style="left:280.8000000000002px;top:420.8px;" width="26" height="19" viewBox="0 0 26 19"><path d="M0,9.2 Q13,-7 26,9.2 Q13,25.4 0,9.2 Z" fill="#e2e2e2"/><circle cx="13" cy="9.2" r="6" fill="#2b2b2b"/><circle cx="13" cy="9.2" r="3.1" fill="#e2e2e2"/></svg>
<svg style="left:320.6999999999998px;top:418.7px;" width="27" height="22" viewBox="0 0 27 22"><path d="M0,4.4 H6.4 L8.4,0 H18 L20,4.4 H26.4 V22 H0 Z" fill="#e2e2e2"/><circle cx="13.6" cy="12.6" r="7.2" fill="#2b2b2b"/><circle cx="13.6" cy="12.6" r="5.2" fill="#e2e2e2"/><circle cx="13.6" cy="12.6" r="3.2" fill="#2b2b2b"/></svg>
<div class="nm" style="left:167.9px;top:421px;width:65.6px">Cubo.005</div>
<div class="row" style="top:453px;background:#282828"></div>
<svg style="left:93px;top:466px;" width="12" height="12" viewBox="0 0 12 12"><path d="M0,0 L11,5.6 L0,11.2 Z" fill="#c2c2c2"/></svg>
<svg style="left:124px;top:458px;" width="30" height="28" viewBox="0 0 30 28"><path d="M3.2,3.2 H26.4 L14.8,25 Z" fill="none" stroke="#c9854d" stroke-width="4.6" stroke-linejoin="round"/></svg>
<svg style="left:280.8000000000002px;top:460.79999999999995px;" width="26" height="19" viewBox="0 0 26 19"><path d="M0,9.2 Q13,-7 26,9.2 Q13,25.4 0,9.2 Z" fill="#e2e2e2"/><circle cx="13" cy="9.2" r="6" fill="#282828"/><circle cx="13" cy="9.2" r="3.1" fill="#e2e2e2"/></svg>
<svg style="left:320.6999999999998px;top:458.70000000000005px;" width="27" height="22" viewBox="0 0 27 22"><path d="M0,4.4 H6.4 L8.4,0 H18 L20,4.4 H26.4 V22 H0 Z" fill="#e2e2e2"/><circle cx="13.6" cy="12.6" r="7.2" fill="#282828"/><circle cx="13.6" cy="12.6" r="5.2" fill="#e2e2e2"/><circle cx="13.6" cy="12.6" r="3.2" fill="#282828"/></svg>
<div class="nm" style="left:167.9px;top:461px;width:65.6px">Círculo</div>
<div class="row" style="top:493px;background:#2b2b2b"></div>
<svg style="left:93px;top:506px;" width="12" height="12" viewBox="0 0 12 12"><path d="M0,0 L11,5.6 L0,11.2 Z" fill="#c2c2c2"/></svg>
<svg style="left:124px;top:497px;" width="30" height="28" viewBox="0 0 30 28"><circle cx="15" cy="14" r="12.5" fill="#c9854d"/><path d="M10,12 L13,18 H17 L20,12 M12,22 H18" stroke="#2b2b2b" stroke-width="2" fill="none"/></svg>
<svg style="left:280.8000000000002px;top:500.79999999999995px;" width="26" height="19" viewBox="0 0 26 19"><path d="M0,9.2 Q13,-7 26,9.2 Q13,25.4 0,9.2 Z" fill="#e2e2e2"/><circle cx="13" cy="9.2" r="6" fill="#2b2b2b"/><circle cx="13" cy="9.2" r="3.1" fill="#e2e2e2"/></svg>
<svg style="left:320.6999999999998px;top:498.70000000000005px;" width="27" height="22" viewBox="0 0 27 22"><path d="M0,4.4 H6.4 L8.4,0 H18 L20,4.4 H26.4 V22 H0 Z" fill="#e2e2e2"/><circle cx="13.6" cy="12.6" r="7.2" fill="#2b2b2b"/><circle cx="13.6" cy="12.6" r="5.2" fill="#e2e2e2"/><circle cx="13.6" cy="12.6" r="3.2" fill="#2b2b2b"/></svg>
<div class="nm" style="left:167.9px;top:501px;width:65.6px">Light</div>
<div class="abs" style="left:57px;top:141px;width:1px;height:373px;background:#5c5c5c;"></div>
<div class="abs" style="left:0px;top:0px;width:374px;height:49px;background:#282828;"></div>
<div class="abs" style="left:16px;top:5px;width:62px;height:39px;background:#282828;border:2px solid #3b3b3b;box-sizing:border-box;border-radius:8px;"></div>
<svg style="left:24px;top:9px;" width="30" height="30" viewBox="0 0 30 30"><rect x="0.6" y="1" width="10" height="5.6" rx="1" fill="#e0e0e0"/><rect x="14.4" y="12.6" width="14" height="5.8" rx="1" fill="#e0e0e0"/><rect x="14.4" y="22.6" width="14" height="5.8" rx="1" fill="#e0e0e0"/><path d="M5.4,7 V25.6 H13 M5.4,15.6 H13" fill="none" stroke="#a0a0a0" stroke-width="2"/></svg>
<svg style="left:53.5px;top:14px;" width="24" height="24" viewBox="0 0 24 24"><path d="M6.4,9.2 L12,14.8 L17.6,9.2" fill="none" stroke="#e6e6e6" stroke-width="2.3" stroke-linecap="butt" stroke-linejoin="miter"/></svg>
<div class="abs" style="left:89px;top:5px;width:64px;height:39px;background:#282828;border:2px solid #3b3b3b;box-sizing:border-box;border-radius:8px;"></div>
<svg style="left:98px;top:8.5px;" width="32" height="32" viewBox="0 0 32 32"><path d="M9,3 H28.5 V22.5 H9 Z M11.2,5.2 V20.3 H26.3 V5.2 Z" fill="#e0e0e0" fill-rule="evenodd"/><path d="M12,19.5 L17.5,10 L20.5,15 L22.5,12.5 L25.5,19.5 Z" fill="#e0e0e0"/><circle cx="22.8" cy="8.5" r="2" fill="#e0e0e0"/><path d="M6,7 V25.5 H25" fill="none" stroke="#e0e0e0" stroke-width="1.8"/><path d="M3,11 V28.5 H21" fill="none" stroke="#9a9a9a" stroke-width="1.8"/></svg>
<svg style="left:127.5px;top:14px;" width="24" height="24" viewBox="0 0 24 24"><path d="M6.4,9.2 L12,14.8 L17.6,9.2" fill="none" stroke="#e6e6e6" stroke-width="2.3" stroke-linecap="butt" stroke-linejoin="miter"/></svg>
<div class="abs" style="left:185px;top:5px;width:211px;height:39px;background:#1d1d1d;border:2px solid #3b3b3b;box-sizing:border-box;border-radius:8px;"></div>
<svg style="left:194px;top:9.900000000000006px;" width="30" height="30" viewBox="0 0 30 30"><circle cx="19.2" cy="10.4" r="9.3" fill="none" stroke="#e6e6e6" stroke-width="2.1"/><path d="M12.8,17.2 L1.6,28.2" stroke="#e6e6e6" stroke-width="2.4"/></svg>
<div class="abs" style="left:364.5px;top:69px;width:5.5px;height:173px;background:#404040;border-radius:3px;"></div>
<div class="abs" style="left:16px;top:504px;width:237px;height:6px;background:#505050;border-radius:3px;opacity:.75;"></div>
</div>
<div id="props"><div class="abs" style="left:0px;top:50px;width:56px;height:1041px;background:#1c1c1c;"></div>
<div class="abs" style="left:8px;top:122px;width:48px;height:1px;background:#262626;"></div>
<div class="abs" style="left:8px;top:420px;width:48px;height:1px;background:#262626;"></div>
<div class="abs" style="left:8px;top:491px;width:48px;height:1px;background:#262626;"></div>
<div class="abs" style="left:8px;top:971px;width:48px;height:1px;background:#262626;"></div>
<div class="abs" style="left:4px;top:844px;width:52px;height:52px;background:#303030;border-radius:7px 0 0 7px;"></div>
<svg style="left:16px;top:79.5px;" width="28" height="28" viewBox="0 0 28 28"><path d="M5.8,1 V12" stroke="#a9a9a9" stroke-width="2" fill="none"/><path d="M1.2,15.6 Q1.2,13.4 3.4,13.4 H8.2 Q10.4,13.4 10.4,15.6 V19.6 A4.6,4.8 0 0 1 1.2,19.6 Z" fill="#a9a9a9"/><path d="M14.8,1.4 Q14.2,9.6 18.8,11.6 V24.4 A2.5,2.5 0 0 0 23.8,24.4 V11.6 Q28.4,9.6 27.8,1.4 L24.2,3.6 V8 H18.4 V3.6 Z" fill="#a9a9a9"/><circle cx="21.3" cy="24.2" r="1.1" fill="#1d1d1d"/></svg>
<svg style="left:16px;top:151px;" width="28" height="28" viewBox="0 0 28 28"><path d="M0.5,6.6 H6 L7.6,3 H14.6 L16.2,6.6 H27.5 V26 H0.5 Z" fill="#a9a9a9"/><rect x="20.6" y="2.6" width="5" height="2.4" fill="#a9a9a9"/><rect x="3.4" y="9.6" width="15.6" height="13.4" fill="#2c2c2c"/><path d="M5,12.6 H17.4 M5,16.3 H17.4 M5,20 H17.4" stroke="#5e5e5e" stroke-width="1.6"/><circle cx="23.6" cy="11.6" r="1.7" fill="#1d1d1d"/><circle cx="23.6" cy="21.2" r="1.7" fill="#1d1d1d"/></svg>
<svg style="left:16px;top:207.60000000000002px;" width="28" height="28" viewBox="0 0 28 28"><path d="M0.5,3.4 Q0.5,0.6 3.4,0.6 H24.6 Q27.5,0.6 27.5,3.4 V13.6 H22.6 V8.6 H5.4 V13.6 H0.5 Z" fill="#a9a9a9"/><rect x="6.4" y="10" width="15.2" height="17.2" fill="#808080"/><path d="M8.4,24.8 L13.4,17.4 L18.6,24.8 Z" fill="#d6d6d6"/><circle cx="18.2" cy="14.6" r="1.6" fill="#d6d6d6"/></svg>
<svg style="left:16px;top:264.6px;" width="28" height="28" viewBox="0 0 28 28"><path d="M7.6,0.6 H27.6 V20.4 H7.6 Z M9.8,2.8 V18.2 H25.4 V2.8 Z" fill="#a9a9a9" fill-rule="evenodd"/><path d="M10.6,17.4 L16,7.6 L19.4,13 L21.2,10.8 L24.6,17.4 Z" fill="#a9a9a9"/><circle cx="22" cy="6.2" r="1.9" fill="#a9a9a9"/><path d="M4.4,5 V23.6 H23.4" fill="none" stroke="#a9a9a9" stroke-width="1.8"/><path d="M1.2,9 V26.8 H19.6" fill="none" stroke="#7c7c7c" stroke-width="1.8"/></svg>
<svg style="left:16px;top:321.5px;" width="28" height="28" viewBox="0 0 28 28"><path d="M8.6,0.4 L0.4,18 Q3,21.6 9.6,20.6 Q9.4,14.6 14.4,11.8 Z" fill="#a9a9a9"/><circle cx="23.4" cy="4.2" r="3.9" fill="#a9a9a9"/><circle cx="19.4" cy="19.6" r="7.2" fill="none" stroke="#a9a9a9" stroke-width="2.4"/><path d="M15.8,18.4 A3.8,3.8 0 0 1 18.8,15.6" fill="none" stroke="#a9a9a9" stroke-width="1.6"/></svg>
<svg style="left:16px;top:376.5px;" width="28" height="28" viewBox="0 0 28 28"><circle cx="14" cy="14.4" r="12" fill="none" stroke="#c4606c" stroke-width="2.2"/><path d="M5,9.4 Q8,5.6 12.6,5 Q14.6,7.6 12.4,9.8 Q13.4,12.6 10.4,13.4 Q8.6,15.6 6,14.4 Q3.8,12.4 5,9.4 Z M10.4,16.6 Q14,15.4 16.6,17.6 Q20.4,18 19.4,21 Q17,24.6 13.6,24.2 Q13.4,19.6 10.4,16.6 Z M19.6,8.4 Q22.6,9 23,12.2 Q21,13.4 19.6,11.6 Z" fill="#c4606c"/><path d="M1,27 L27,1.4" stroke="#c4606c" stroke-width="2"/></svg>
<svg style="left:16px;top:448.70000000000005px;" width="28" height="28" viewBox="0 0 28 28"><g fill="none" stroke="#e6e6e6" stroke-width="2.2"><rect x="1.2" y="1.6" width="25.6" height="6"/><path d="M3.2,8 V24.8 H24.8 V8"/></g><rect x="10.6" y="12.6" width="6.8" height="3" fill="#e6e6e6"/></svg>
<svg style="left:16px;top:519.5px;" width="28" height="28" viewBox="0 0 28 28"><path d="M1,7.4 V1 H7.4 M20.6,1 H27 V7.4 M27,20.6 V27 H20.6 M7.4,27 H1 V20.6" fill="none" stroke="#a06a3e" stroke-width="2" stroke-dasharray="0"/><rect x="6" y="6" width="16" height="16" fill="#cc8549"/></svg>
<svg style="left:16px;top:575px;" width="28" height="28" viewBox="0 0 28 28"><path d="M27.4,7 A8.4,8.4 0 0 1 16.6,15 L7,25.4 A3.6,3.6 0 0 1 1.4,20.2 L11.6,10.4 A8.4,8.4 0 0 1 20.6,0.4 L16.2,5.2 L17.4,9.6 L22.2,11 Z" fill="#5781c6"/></svg>
<svg style="left:16px;top:632px;" width="28" height="28" viewBox="0 0 28 28"><g stroke="#5781c6" stroke-width="2" fill="none"><path d="M5.4,5.4 H24 M5.4,5.4 V24 M5.4,5.4 L24,24"/></g><circle cx="5.4" cy="5.4" r="4.8" fill="#5781c6"/><circle cx="24" cy="5.4" r="3" fill="#5781c6"/><circle cx="5.4" cy="24" r="3" fill="#5781c6"/><circle cx="24" cy="24" r="3.6" fill="#5781c6"/></svg>
<svg style="left:16px;top:688px;" width="28" height="28" viewBox="0 0 28 28"><path d="M20.6,24.4 A12.4,12.4 0 1 1 20.4,3.4" fill="none" stroke="#5781c6" stroke-width="2.2"/><circle cx="13.6" cy="14" r="5.6" fill="#5781c6"/><circle cx="23.4" cy="4.6" r="3.4" fill="#5781c6"/></svg>
<svg style="left:16px;top:744px;" width="28" height="28" viewBox="0 0 28 28"><g transform="rotate(-30 14 14)"><path d="M2,14 A9,9 0 0 1 11,5 H22 A6,6 0 0 1 22,17 L11,23 A9,9 0 0 1 2,14 Z" fill="none" stroke="#5781c6" stroke-width="2.2"/><circle cx="11" cy="14" r="5" fill="none" stroke="#5781c6" stroke-width="2.6"/><circle cx="11" cy="14" r="1.6" fill="#5781c6"/><circle cx="22.4" cy="11" r="1.7" fill="#5781c6"/></g></svg>
<svg style="left:16px;top:799.5px;" width="28" height="28" viewBox="0 0 28 28"><g fill="none" stroke="#27c79a" stroke-width="2.2"><path d="M4.4,4.4 H23.6 L14,23.6 Z"/><rect x="1.4" y="1.4" width="6" height="6" fill="#1d1d1d"/><rect x="20.6" y="1.4" width="6" height="6" fill="#1d1d1d"/><rect x="11" y="20.6" width="6" height="6" fill="#1d1d1d"/></g></svg>
<svg style="left:16px;top:856px;" width="28" height="28" viewBox="0 0 28 28"><circle cx="14" cy="14" r="12.6" fill="#d8636e"/><path d="M14,1.4 A12.6,12.6 0 0 1 26.2,11 Q20,16 14,15.4 Z" fill="#303030"/><path d="M14,15.4 Q7,15.4 1.8,11.6 A12.6,12.6 0 0 0 14,26.6 Z" fill="#303030"/><circle cx="14" cy="14" r="12.6" fill="none" stroke="#d8636e" stroke-width="2"/></svg>
<svg style="left:16px;top:927.5px;" width="28" height="28" viewBox="0 0 28 28"><rect x="1.50" y="1.50" width="6.25" height="6.25" fill="#b85863"/><rect x="1.50" y="14.00" width="6.25" height="6.25" fill="#b85863"/><rect x="7.75" y="7.75" width="6.25" height="6.25" fill="#b85863"/><rect x="7.75" y="20.25" width="6.25" height="6.25" fill="#b85863"/><rect x="14.00" y="1.50" width="6.25" height="6.25" fill="#b85863"/><rect x="14.00" y="14.00" width="6.25" height="6.25" fill="#b85863"/><rect x="20.25" y="7.75" width="6.25" height="6.25" fill="#b85863"/><rect x="20.25" y="20.25" width="6.25" height="6.25" fill="#b85863"/><rect x="1" y="1" width="26" height="26" fill="none" stroke="#b85863" stroke-width="2"/></svg>
<div class="abs" style="left:16px;top:5px;width:62px;height:39px;background:#282828;border:2px solid #3b3b3b;box-sizing:border-box;border-radius:8px;"></div>
<svg style="left:24.59999999999991px;top:10px;" width="28" height="28" viewBox="0 0 28 28"><rect x="0.6" y="1" width="26.8" height="11.4" rx="5.7" fill="#e6e6e6"/><rect x="12.6" y="3.4" width="12.4" height="6.6" rx="3.3" fill="#282828"/><rect x="0.6" y="16" width="26.8" height="11.4" rx="5.7" fill="#e6e6e6"/><rect x="16.6" y="18.4" width="8.4" height="6.6" rx="3.3" fill="#282828"/></svg>
<svg style="left:53.5px;top:14px;" width="24" height="24" viewBox="0 0 24 24"><path d="M6.4,9.2 L12,14.8 L17.6,9.2" fill="none" stroke="#e6e6e6" stroke-width="2.3" stroke-linecap="butt" stroke-linejoin="miter"/></svg>
<div class="abs" style="left:123px;top:5px;width:230px;height:39px;background:#1d1d1d;border:2px solid #3b3b3b;box-sizing:border-box;border-radius:8px;"></div>
<svg style="left:131px;top:9.799999999999955px;" width="30" height="30" viewBox="0 0 30 30"><circle cx="19.2" cy="10.4" r="9.3" fill="none" stroke="#e6e6e6" stroke-width="2.1"/><path d="M12.8,17.2 L1.6,28.2" stroke="#e6e6e6" stroke-width="2.4"/></svg>
<svg style="left:77.40000000000009px;top:71.60000000000002px;" width="30" height="30" viewBox="0 0 30 30"><path d="M1.2,8.7 V1.2 H8.7 M21.3,1.2 H28.8 V8.7 M28.8,21.1 V28.6 H21.3 M8.7,28.6 H1.2 V21.1" fill="none" stroke="#a0a0a0" stroke-width="2"/><rect x="6.8" y="6.8" width="16.4" height="16.2" fill="#e6e6e6"/></svg>
<div class="t pt" style="left:124.4px;top:73px;">Pl</div>
<svg style="left:168px;top:76px;" width="16" height="22" viewBox="0 0 16 22"><path d="M3.2,2.6 L12,11 L3.2,19.4" fill="none" stroke="#e0e0e0" stroke-width="2.2"/></svg>
<svg style="left:200px;top:70.79999999999995px;" width="30" height="30" viewBox="0 0 30 30"><circle cx="15" cy="15" r="13" fill="#e6e6e6"/><path d="M15,2 A13,13 0 0 1 27.6,12 Q21,17.2 15,16.6 Z" fill="#303030"/><path d="M15,16.6 Q8,16.6 2.6,12.6 A13,13 0 0 0 15,28 Z" fill="#303030"/><circle cx="15" cy="15" r="13" fill="none" stroke="#e6e6e6" stroke-width="2"/></svg>
<div class="t pt" style="left:247.3px;top:73px;">M…</div>
<svg style="left:325px;top:70px;" width="32" height="32" viewBox="0 0 32 32"><g fill="none" stroke="#8a8a8a" stroke-width="2" stroke-linejoin="round" stroke-linecap="round"><path d="M19.5,3.5 L28.5,12.5 L25.5,13.5 L21.5,19.5 L22,23.5 L8.5,10 L12.5,10.5 L18.5,6.5 Z"/><path d="M14.5,17.5 L3,29"/></g></svg>
<div class="abs" style="left:364px;top:69px;width:5.5px;height:454px;background:#424242;border-radius:3px;"></div>
<div class="abs" style="left:73px;top:139px;width:230px;height:158px;background:#242424;border:2px solid #393939;box-sizing:border-box;border-radius:9px;"></div>
<div class="abs" style="left:84px;top:150px;width:208px;height:36px;background:#47474f;border-radius:7px;"></div>
<svg style="left:91px;top:154.39999999999998px;" width="28" height="28" viewBox="0 0 28 28"><defs><radialGradient id="msph" cx="0.36" cy="0.34" r="0.7"><stop offset="0" stop-color="#8a8aa8"/><stop offset="0.18" stop-color="#3a3a58"/><stop offset="0.55" stop-color="#14142c"/><stop offset="1" stop-color="#05050f"/></radialGradient></defs><circle cx="13.6" cy="13.5" r="13" fill="url(#msph)"/></svg>
<div class="t pt" style="left:134.6px;top:155px;color:#ffffff;">Material.001</div>
<svg style="left:96px;top:271px;" width="12" height="12" viewBox="0 0 12 12"><path d="M0,0 L11,5.6 L0,11.2 Z" fill="#c2c2c2"/></svg>
<svg style="left:196.80000000000018px;top:273px;" width="24" height="10" viewBox="0 0 24 10"><rect x="0.0" y="0.0" width="2" height="2" fill="#c8c8c8"/><rect x="0.0" y="5.6" width="2" height="2" fill="#c8c8c8"/><rect x="6.2" y="0.0" width="2" height="2" fill="#c8c8c8"/><rect x="6.2" y="5.6" width="2" height="2" fill="#c8c8c8"/><rect x="12.4" y="0.0" width="2" height="2" fill="#c8c8c8"/><rect x="12.4" y="5.6" width="2" height="2" fill="#c8c8c8"/><rect x="18.6" y="0.0" width="2" height="2" fill="#c8c8c8"/><rect x="18.6" y="5.6" width="2" height="2" fill="#c8c8c8"/></svg>
<div class="abs" style="left:322px;top:140px;width:36px;height:77px;background:#3c3c3c;border-radius:8px;"></div>
<div class="abs" style="left:322px;top:140px;width:36px;height:36.5px;background:#545454;border-radius:8px 8px 0 0;"></div>
<div class="abs" style="left:322px;top:177.5px;width:36px;height:39.5px;background:#545454;border-radius:0 0 8px 8px;"></div>
<svg style="left:329px;top:147px;" width="22" height="22" viewBox="0 0 22 22"><path d="M11,2 V20 M2,11 H20" stroke="#e6e6e6" stroke-width="2" fill="none"/></svg>
<svg style="left:329px;top:186px;" width="22" height="22" viewBox="0 0 22 22"><path d="M2,11 H20" stroke="#e6e6e6" stroke-width="2" fill="none"/></svg>
<div class="abs" style="left:322px;top:232px;width:36px;height:37px;background:#242424;border:2px solid #3b3b3b;box-sizing:border-box;border-radius:8px;"></div>
<svg style="left:328px;top:238px;" width="24" height="24" viewBox="0 0 24 24"><path d="M3.6,8 L12,16 L20.4,8" fill="none" stroke="#e6e6e6" stroke-width="2.2"/></svg>
<div class="abs" style="left:73px;top:309px;width:206px;height:37px;background:#3c3c3c;border-radius:8px;"></div>
<div class="abs" style="left:74px;top:310px;width:45px;height:35px;background:#282828;border-radius:7px 0 0 7px;"></div>
<div class="abs" style="left:121px;top:310px;width:62px;height:35px;background:#1d1d1d;"></div>
<div class="abs" style="left:184px;top:310px;width:30px;height:35px;background:#545454;"></div>
<div class="abs" style="left:215.5px;top:310px;width:31.0px;height:35px;background:#545454;"></div>
<div class="abs" style="left:248px;top:310px;width:30px;height:35px;background:#545454;border-radius:0 7px 7px 0;"></div>
<svg style="left:79px;top:313px;" width="30" height="30" viewBox="0 0 30 30"><circle cx="15" cy="15" r="13" fill="#e6e6e6"/><path d="M15,2 A13,13 0 0 1 27.6,12 Q21,17.2 15,16.6 Z" fill="#282828"/><path d="M15,16.6 Q8,16.6 2.6,12.6 A13,13 0 0 0 15,28 Z" fill="#282828"/><circle cx="15" cy="15" r="13" fill="none" stroke="#e6e6e6" stroke-width="2"/></svg>
<svg style="left:102px;top:321px;" width="14" height="14" viewBox="0 0 14 14"><path d="M1.6,3.6 L7,10 L12.4,3.6" fill="none" stroke="#e6e6e6" stroke-width="2.2"/></svg>
<div class="t pt" style="left:136.8px;top:316px;">Ma</div>
<svg style="left:184.5px;top:312.5px;" width="30" height="32" viewBox="0 0 30 32"><path d="M15,3 Q9,6.6 3.6,6.6 Q2.6,20 15,28.6 Q27.4,20 26.4,6.6 Q21,6.6 15,3 Z" fill="none" stroke="#8a8a8a" stroke-width="2.2"/></svg>
<svg style="left:215px;top:312px;" width="32" height="32" viewBox="0 0 32 32"><g fill="none" stroke="#e0e0e0" stroke-width="2.2" stroke-linejoin="miter"><path d="M11,6 L21,6 L27,12 L27,22 L11,22 Z"/><path d="M20.5,6 L20.5,12.5 L27,12.5" /><path d="M8,11 L4.5,11 L4.5,28.5 L21,28.5 L21,25"/></g></svg>
<svg style="left:251px;top:316px;" width="24" height="24" viewBox="0 0 24 24"><path d="M3.4,3.4 L20.6,20.6 M20.6,3.4 L3.4,20.6" stroke="#e6e6e6" stroke-width="2.2"/></svg>
<div class="abs" style="left:298px;top:309px;width:60px;height:37px;background:#282828;border:2px solid #3b3b3b;box-sizing:border-box;border-radius:8px;"></div>
<svg style="left:305px;top:312.6px;" width="30" height="31" viewBox="0 0 30 31"><g fill="none" stroke="#e6e6e6" stroke-width="2.1"><path d="M5,5 H25 L15,26 Z"/><rect x="1.4" y="1.6" width="6.4" height="6.4" fill="#282828"/><rect x="22.2" y="1.6" width="6.4" height="6.4" fill="#282828"/><rect x="11.8" y="23" width="6.4" height="6.4" fill="#282828"/></g></svg>
<svg style="left:333.1999999999998px;top:317.4px;" width="24" height="24" viewBox="0 0 24 24"><path d="M6.4,9.2 L12,14.8 L17.6,9.2" fill="none" stroke="#e6e6e6" stroke-width="2.3" stroke-linecap="butt" stroke-linejoin="miter"/></svg>
<div class="abs" style="left:72px;top:368px;width:288px;height:49.5px;background:#3d3d3d;border-radius:8px;"></div>
<svg style="left:93px;top:382px;" width="14" height="22" viewBox="0 0 14 22"><path d="M2.4,2.4 L10,10.4 L2.4,18.4" fill="none" stroke="#d0d0d0" stroke-width="2"/></svg>
<div class="t pt" style="left:116.4px;top:381px;">Previsualización</div>
<svg style="left:324.5999999999999px;top:388.6px;" width="24" height="10" viewBox="0 0 24 10"><rect x="0.0" y="0.0" width="2.6" height="2.6" fill="#161616"/><rect x="0.0" y="5.6" width="2.6" height="2.6" fill="#161616"/><rect x="6.2" y="0.0" width="2.6" height="2.6" fill="#161616"/><rect x="6.2" y="5.6" width="2.6" height="2.6" fill="#161616"/><rect x="12.4" y="0.0" width="2.6" height="2.6" fill="#161616"/><rect x="12.4" y="5.6" width="2.6" height="2.6" fill="#161616"/><rect x="18.6" y="0.0" width="2.6" height="2.6" fill="#161616"/><rect x="18.6" y="5.6" width="2.6" height="2.6" fill="#161616"/></svg>
<div class="abs" style="left:72px;top:422px;width:288px;height:702px;background:#3d3d3d;border-radius:8px;"></div>
<svg style="left:87px;top:440.6px;" width="20" height="16" viewBox="0 0 20 16"><path d="M2.2,2.6 L9.8,10.2 L17.4,2.6" fill="none" stroke="#d0d0d0" stroke-width="2"/></svg>
<div class="t pt" style="left:116.4px;top:435px;">Superficie</div>
<svg style="left:324.5999999999999px;top:443.20000000000005px;" width="24" height="10" viewBox="0 0 24 10"><rect x="0.0" y="0.0" width="2.6" height="2.6" fill="#161616"/><rect x="0.0" y="5.6" width="2.6" height="2.6" fill="#161616"/><rect x="6.2" y="0.0" width="2.6" height="2.6" fill="#161616"/><rect x="6.2" y="5.6" width="2.6" height="2.6" fill="#161616"/><rect x="12.4" y="0.0" width="2.6" height="2.6" fill="#161616"/><rect x="12.4" y="5.6" width="2.6" height="2.6" fill="#161616"/><rect x="18.6" y="0.0" width="2.6" height="2.6" fill="#161616"/><rect x="18.6" y="5.6" width="2.6" height="2.6" fill="#161616"/></svg>
<div class="abs" style="left:90px;top:490px;width:252px;height:36px;background:#4772b3;border-radius:7px;box-shadow:0 1px 1px rgba(0,0,0,.35);"></div>
<svg style="left:97.40000000000009px;top:494px;" width="30" height="28" viewBox="0 0 30 28"><rect x="5" y="1" width="16" height="10.6" rx="2.6" fill="#ffffff"/><rect x="0.6" y="16.6" width="16" height="10.6" rx="2.6" fill="#ffffff"/><path d="M7.6,7.4 H18.4 M3.2,23 H14" stroke="#4772b3" stroke-width="1.8"/><path d="M21,5.6 H24.4 Q27.4,5.6 27.4,9 V19 Q27.4,22.4 24,22.4 H16.6" fill="none" stroke="#ffffff" stroke-width="1.7" opacity=".75"/></svg>
<div class="t pt" style="left:174.3px;top:495px;color:#ffffff;">Usar nodos</div>
<div class="lbl" style="left:45.6px;top:567.4000000000001px">Supe…</div>
<div class="abs" style="left:186px;top:562px;width:116px;height:36px;background:#282828;border-radius:7px;box-shadow:0 1.5px 1px rgba(0,0,0,.3);"></div>
<svg style="left:193.69999999999982px;top:569.9000000000001px;" width="20" height="20" viewBox="0 0 20 20"><circle cx="10" cy="10" r="7.4" fill="#63c763" stroke="#101010" stroke-width="1.6"/></svg>
<div class="t pt" style="left:227.2px;top:568px;">BSD…</div>
<div class="abs" style="left:186px;top:634.5px;width:116px;height:35.5px;background:#282828;border-radius:7px;box-shadow:0 1.5px 1px rgba(0,0,0,.3);"></div>
<div class="t pt" style="left:199.6px;top:639px;">GGX</div>
<svg style="left:278px;top:642.5999999999999px;" width="24" height="24" viewBox="0 0 24 24"><path d="M6.4,9.2 L12,14.8 L17.6,9.2" fill="none" stroke="#e6e6e6" stroke-width="2.3" stroke-linecap="butt" stroke-linejoin="miter"/></svg>
<svg style="left:318px;top:646px;" width="12" height="12" viewBox="0 0 12 12"><circle cx="6" cy="6" r="3.9" fill="#d6d6d6"/></svg>
<div class="abs" style="left:186px;top:684.5px;width:116px;height:35.5px;background:#282828;border-radius:7px;box-shadow:0 1.5px 1px rgba(0,0,0,.3);"></div>
<div class="t pt" style="left:199.6px;top:689px;">Cami…</div>
<svg style="left:278px;top:692.5999999999999px;" width="24" height="24" viewBox="0 0 24 24"><path d="M6.4,9.2 L12,14.8 L17.6,9.2" fill="none" stroke="#e6e6e6" stroke-width="2.3" stroke-linecap="butt" stroke-linejoin="miter"/></svg>
<svg style="left:318px;top:696px;" width="12" height="12" viewBox="0 0 12 12"><circle cx="6" cy="6" r="3.9" fill="#d6d6d6"/></svg>
<div class="lbl" style="left:45.6px;top:738.2px">Colo…</div>
<div class="abs" style="left:186px;top:734px;width:116px;height:36px;background:#3a3a3a;border-radius:7px;box-shadow:0 1.5px 1px rgba(0,0,0,.3);"></div>
<div class="abs" style="left:186px;top:734px;width:36px;height:36px;background:#282828;border-radius:7px 0 0 7px;"></div>
<svg style="left:193.69999999999982px;top:742.0px;" width="20" height="20" viewBox="0 0 20 20"><circle cx="10" cy="10" r="7.4" fill="#cccc33" stroke="#101010" stroke-width="1.6"/></svg>
<div class="abs" style="left:223.5999999999999px;top:734px;width:78.40000000000009px;height:36px;background:#02021f;border-radius:0 7px 7px 0;"></div>
<svg style="left:318px;top:745.5999999999999px;" width="12" height="12" viewBox="0 0 12 12"><circle cx="6" cy="6" r="3.9" fill="#d6d6d6"/></svg>
<div class="lbl" style="left:45.6px;top:788px">Tran…</div>
<div class="abs" style="left:186px;top:784px;width:116px;height:36px;background:#3a3a3a;border-radius:7px;box-shadow:0 1.5px 1px rgba(0,0,0,.3);"></div>
<div class="abs" style="left:186px;top:784px;width:36px;height:36px;background:#282828;border-radius:7px 0 0 7px;"></div>
<svg style="left:193.69999999999982px;top:792.0px;" width="20" height="20" viewBox="0 0 20 20"><circle cx="10" cy="10" r="7.4" fill="#a1a1a1" stroke="#101010" stroke-width="1.6"/></svg>
<div class="abs" style="left:223.5999999999999px;top:784px;width:78.40000000000009px;height:36px;background:#545454;border-radius:0 7px 7px 0;"></div>
<div class="val" style="left:223.5999999999999px;width:78.4px;top:788px">0.0</div>
<svg style="left:318px;top:795.5999999999999px;" width="12" height="12" viewBox="0 0 12 12"><circle cx="6" cy="6" r="3.9" fill="#d6d6d6"/></svg>
<div class="lbl" style="left:45.6px;top:838.4000000000001px">Radi…</div>
<div class="abs" style="left:186px;top:834px;width:32px;height:36px;background:#282828;border-radius:7px;box-shadow:0 1.5px 1px rgba(0,0,0,.3);"></div>
<svg style="left:193.69999999999982px;top:842px;" width="20" height="20" viewBox="0 0 20 20"><circle cx="10" cy="10" r="7.4" fill="#6363c7" stroke="#101010" stroke-width="1.6"/></svg>
<div class="abs" style="left:233px;top:834px;width:69px;height:116px;background:#3a3a3a;border-radius:7px;box-shadow:0 1.5px 1px rgba(0,0,0,.3);"></div>
<div class="abs" style="left:233px;top:834px;width:69px;height:37px;background:#545454;border-radius:7px 7px 0 0;"></div>
<div class="abs" style="left:233px;top:872.5px;width:69px;height:38.0px;background:#545454;"></div>
<div class="abs" style="left:233px;top:912px;width:69px;height:38px;background:#545454;border-radius:0 0 7px 7px;"></div>
<div class="val" style="left:233px;width:69px;top:839px">1.</div>
<svg style="left:318px;top:845.8px;" width="12" height="12" viewBox="0 0 12 12"><circle cx="6" cy="6" r="3.9" fill="#d6d6d6"/></svg>
<div class="val" style="left:233px;width:69px;top:878px">0.</div>
<svg style="left:318px;top:885.7px;" width="12" height="12" viewBox="0 0 12 12"><circle cx="6" cy="6" r="3.9" fill="#d6d6d6"/></svg>
<div class="val" style="left:233px;width:69px;top:918px">0.</div>
<svg style="left:318px;top:925.5999999999999px;" width="12" height="12" viewBox="0 0 12 12"><circle cx="6" cy="6" r="3.9" fill="#d6d6d6"/></svg>
<div class="lbl" style="left:45.6px;top:968.7px">Colo…</div>
<div class="abs" style="left:186px;top:964px;width:116px;height:36.40000000000009px;background:#3a3a3a;border-radius:7px;box-shadow:0 1.5px 1px rgba(0,0,0,.3);"></div>
<div class="abs" style="left:186px;top:964px;width:36px;height:36.40000000000009px;background:#282828;border-radius:7px 0 0 7px;"></div>
<svg style="left:193.69999999999982px;top:972.2px;" width="20" height="20" viewBox="0 0 20 20"><circle cx="10" cy="10" r="7.4" fill="#cccc33" stroke="#101010" stroke-width="1.6"/></svg>
<div class="abs" style="left:223.5999999999999px;top:964px;width:78.40000000000009px;height:36.40000000000009px;background:#120201;border-radius:0 7px 7px 0;"></div>
<svg style="left:318px;top:975.5px;" width="12" height="12" viewBox="0 0 12 12"><circle cx="6" cy="6" r="3.9" fill="#d6d6d6"/></svg>
<div class="lbl" style="left:45.6px;top:1018.5999999999999px">IR de…</div>
<div class="abs" style="left:186px;top:1014.4000000000001px;width:116px;height:36.0px;background:#3a3a3a;border-radius:7px;box-shadow:0 1.5px 1px rgba(0,0,0,.3);"></div>
<div class="abs" style="left:186px;top:1014.4000000000001px;width:36px;height:36.0px;background:#282828;border-radius:7px 0 0 7px;"></div>
<svg style="left:193.69999999999982px;top:1022.4000000000001px;" width="20" height="20" viewBox="0 0 20 20"><circle cx="10" cy="10" r="7.4" fill="#a1a1a1" stroke="#101010" stroke-width="1.6"/></svg>
<div class="abs" style="left:223.5999999999999px;top:1014.4000000000001px;width:78.40000000000009px;height:36.0px;background:#545454;border-radius:0 7px 7px 0;"></div>
<div class="abs" style="left:223.5999999999999px;top:1014.4000000000001px;width:8.400000000000091px;height:36.0px;background:#4772b3;"></div>
<div class="val" style="left:223.5999999999999px;width:78.4px;top:1019px">1.4</div>
<svg style="left:318px;top:1025.8px;" width="12" height="12" viewBox="0 0 12 12"><circle cx="6" cy="6" r="3.9" fill="#d6d6d6"/></svg>
<div class="lbl" style="left:45.6px;top:1068.4px">Anis…</div>
<div class="abs" style="left:186px;top:1064.4px;width:116px;height:36.0px;background:#3a3a3a;border-radius:7px;box-shadow:0 1.5px 1px rgba(0,0,0,.3);"></div>
<div class="abs" style="left:186px;top:1064.4px;width:36px;height:36.0px;background:#282828;border-radius:7px 0 0 7px;"></div>
<svg style="left:193.69999999999982px;top:1072.4px;" width="20" height="20" viewBox="0 0 20 20"><circle cx="10" cy="10" r="7.4" fill="#a1a1a1" stroke="#101010" stroke-width="1.6"/></svg>
<div class="abs" style="left:223.5999999999999px;top:1064.4px;width:78.40000000000009px;height:36.0px;background:#545454;border-radius:0 7px 7px 0;"></div>
<div class="val" style="left:223.5999999999999px;width:78.4px;top:1068px">0.0</div>
<svg style="left:318px;top:1075.7px;" width="12" height="12" viewBox="0 0 12 12"><circle cx="6" cy="6" r="3.9" fill="#d6d6d6"/></svg>
</div>
<div id="tl"><div id="tlh"></div><svg style="left:0px;top:0px;" width="2495" height="118" viewBox="0 0 2495 118"><rect x="34.2" y="95.5" width="1.8" height="30" fill="#171717"/><rect x="80.6" y="95.5" width="1.8" height="30" fill="#111111"/><rect x="127.0" y="95.5" width="1.8" height="30" fill="#171717"/><rect x="173.4" y="95.5" width="1.8" height="30" fill="#111111"/><rect x="219.8" y="95.5" width="1.8" height="30" fill="#171717"/><rect x="266.2" y="95.5" width="1.8" height="30" fill="#111111"/><rect x="312.6" y="95.5" width="1.8" height="30" fill="#171717"/><rect x="359.0" y="95.5" width="1.8" height="30" fill="#111111"/><rect x="405.4" y="95.5" width="1.8" height="30" fill="#171717"/><rect x="451.8" y="95.5" width="1.8" height="30" fill="#111111"/><rect x="498.2" y="95.5" width="1.8" height="30" fill="#171717"/><rect x="544.6" y="95.5" width="1.8" height="30" fill="#111111"/><rect x="591.0" y="95.5" width="1.8" height="30" fill="#171717"/><rect x="637.4" y="95.5" width="1.8" height="30" fill="#111111"/><rect x="683.8" y="95.5" width="1.8" height="30" fill="#171717"/><rect x="730.2" y="95.5" width="1.8" height="30" fill="#111111"/><rect x="776.6" y="95.5" width="1.8" height="30" fill="#171717"/><rect x="823.0" y="95.5" width="1.8" height="30" fill="#111111"/><rect x="869.4" y="95.5" width="1.8" height="30" fill="#171717"/><rect x="915.8" y="95.5" width="1.8" height="30" fill="#111111"/><rect x="962.2" y="95.5" width="1.8" height="30" fill="#171717"/><rect x="1008.6" y="95.5" width="1.8" height="30" fill="#111111"/><rect x="1055.0" y="95.5" width="1.8" height="30" fill="#171717"/><rect x="1101.4" y="95.5" width="1.8" height="30" fill="#111111"/><rect x="1147.8" y="95.5" width="1.8" height="30" fill="#171717"/><rect x="1194.2" y="95.5" width="1.8" height="30" fill="#111111"/><rect x="1240.6" y="95.5" width="1.8" height="30" fill="#171717"/><rect x="1287.0" y="95.5" width="1.8" height="30" fill="#111111"/><rect x="1333.4" y="95.5" width="1.8" height="30" fill="#171717"/><rect x="1379.8" y="95.5" width="1.8" height="30" fill="#111111"/><rect x="1426.2" y="95.5" width="1.8" height="30" fill="#171717"/><rect x="1472.6" y="95.5" width="1.8" height="30" fill="#111111"/><rect x="1519.0" y="95.5" width="1.8" height="30" fill="#171717"/><rect x="1565.4" y="95.5" width="1.8" height="30" fill="#111111"/><rect x="1611.8" y="95.5" width="1.8" height="30" fill="#171717"/><rect x="1658.2" y="95.5" width="1.8" height="30" fill="#111111"/><rect x="1704.6" y="95.5" width="1.8" height="30" fill="#171717"/><rect x="1751.0" y="95.5" width="1.8" height="30" fill="#111111"/><rect x="1797.4" y="95.5" width="1.8" height="30" fill="#171717"/><rect x="1843.8" y="95.5" width="1.8" height="30" fill="#111111"/><rect x="1890.2" y="95.5" width="1.8" height="30" fill="#171717"/><rect x="1936.6" y="95.5" width="1.8" height="30" fill="#111111"/><rect x="1983.0" y="95.5" width="1.8" height="30" fill="#171717"/><rect x="2029.4" y="95.5" width="1.8" height="30" fill="#111111"/><rect x="2075.8" y="95.5" width="1.8" height="30" fill="#171717"/><rect x="2122.2" y="95.5" width="1.8" height="30" fill="#111111"/><rect x="2168.6" y="95.5" width="1.8" height="30" fill="#171717"/><rect x="2215.0" y="95.5" width="1.8" height="30" fill="#111111"/><rect x="2261.4" y="95.5" width="1.8" height="30" fill="#171717"/><rect x="2307.8" y="95.5" width="1.8" height="30" fill="#111111"/><rect x="2354.2" y="95.5" width="1.8" height="30" fill="#171717"/><rect x="2400.6" y="95.5" width="1.8" height="30" fill="#111111"/><rect x="2447.0" y="95.5" width="1.8" height="30" fill="#171717"/><rect x="2493.4" y="95.5" width="1.8" height="30" fill="#111111"/></svg>
</div>
<div class="abs" style="left:17px;top:1555px;width:62px;height:39px;background:#282828;border:2px solid #3b3b3b;box-sizing:border-box;border-radius:8px;"></div>
<svg style="left:25.5px;top:1559.6px;" width="29" height="29" viewBox="0 0 29 29"><circle cx="14.3" cy="14.3" r="14" fill="#e6e6e6"/><path d="M15.6,7.4 L9.4,14.3 L15.6,21.2" fill="none" stroke="#282828" stroke-width="3"/></svg>
<svg style="left:54.2px;top:1563.4px;" width="24" height="24" viewBox="0 0 24 24"><path d="M6.4,9.2 L12,14.8 L17.6,9.2" fill="none" stroke="#e6e6e6" stroke-width="2.3" stroke-linecap="butt" stroke-linejoin="miter"/></svg>
<div class="abs" style="left:91px;top:1555px;width:315px;height:39px;background:#3b3b3b;border-radius:8px;"></div>
<div class="abs" style="left:93px;top:1557px;width:190px;height:35px;background:#282828;border-radius:6px 0 0 6px;"></div>
<div class="abs" style="left:285px;top:1557px;width:119px;height:35px;background:#282828;border-radius:0 6px 6px 0;"></div>
<div class="t" style="left:106.2px;top:1561px;">Reproducción</div>
<svg style="left:259.6px;top:1563.8px;" width="24" height="24" viewBox="0 0 24 24"><path d="M6.4,9.2 L12,14.8 L17.6,9.2" fill="none" stroke="#e6e6e6" stroke-width="2.3" stroke-linecap="butt" stroke-linejoin="miter"/></svg>
<div class="t" style="left:299.1px;top:1561px;">Claves</div>
<svg style="left:380.3px;top:1563.8px;" width="24" height="24" viewBox="0 0 24 24"><path d="M6.4,9.2 L12,14.8 L17.6,9.2" fill="none" stroke="#e6e6e6" stroke-width="2.3" stroke-linecap="butt" stroke-linejoin="miter"/></svg>
<div class="t" style="left:425.0px;top:1561px;">Vista</div>
<div class="t" style="left:508.0px;top:1561px;">Marcador</div>
<div class="abs" style="left:1063px;top:1555px;width:78px;height:39px;background:#3b3b3b;border-radius:8px;"></div>
<div class="abs" style="left:1065px;top:1557px;width:35.5px;height:35px;background:#545454;border-radius:6px 0 0 6px;"></div>
<div class="abs" style="left:1101.5px;top:1557px;width:37.5px;height:35px;background:#2a2a2a;border-radius:0 6px 6px 0;"></div>
<svg style="left:1072px;top:1564px;" width="20" height="20" viewBox="0 0 20 20"><circle cx="10" cy="10" r="8.2" fill="#e6e6e6"/></svg>
<svg style="left:1108.5px;top:1563.8px;" width="24" height="24" viewBox="0 0 24 24"><path d="M6.4,9.2 L12,14.8 L17.6,9.2" fill="none" stroke="#595959" stroke-width="2.3" stroke-linecap="butt" stroke-linejoin="miter"/></svg>
<div class="abs" style="left:1153px;top:1555px;width:238px;height:39px;background:#3a3a3a;border-radius:8px;"></div>
<div class="abs" style="left:1154.0px;top:1556px;width:38.59999999999991px;height:37px;background:#545454;border-radius:7px 0 0 7px;"></div>
<svg style="left:1162.3px;top:1563.5px;" width="22" height="22" viewBox="0 0 22 22"><path d="M3.4,2.6 V19.4" stroke="#e6e6e6" stroke-width="3.2"/><path d="M18.6,2.4 V19.6 L7,11 Z" fill="#e6e6e6"/></svg>
<div class="abs" style="left:1193.6px;top:1556px;width:38.600000000000136px;height:37px;background:#545454;border-radius:0px;"></div>
<svg style="left:1200.9px;top:1563.5px;" width="24" height="22" viewBox="0 0 24 22"><path d="M7.4,2.6 L14.6,11 L7.4,19.4 L0.2,11 Z" fill="#e6e6e6"/><path d="M24,4 V18 L15,11 Z" fill="#e6e6e6"/></svg>
<div class="abs" style="left:1233.2px;top:1556px;width:38.59999999999991px;height:37px;background:#545454;border-radius:0px;"></div>
<svg style="left:1241.5px;top:1563.5px;" width="22" height="22" viewBox="0 0 22 22"><path d="M19,1.6 V20.4 L3,11 Z" fill="#e6e6e6"/></svg>
<div class="abs" style="left:1272.8px;top:1556px;width:38.5px;height:37px;background:#545454;border-radius:0px;"></div>
<svg style="left:1281.0px;top:1563.5px;" width="22" height="22" viewBox="0 0 22 22"><path d="M4,1.6 V20.4 L20,11 Z" fill="#e6e6e6"/></svg>
<div class="abs" style="left:1312.3px;top:1556px;width:38.600000000000136px;height:37px;background:#545454;border-radius:0px;"></div>
<svg style="left:1319.6px;top:1563.5px;" width="24" height="22" viewBox="0 0 24 22"><path d="M16.6,2.6 L23.8,11 L16.6,19.4 L9.4,11 Z" fill="#e6e6e6"/><path d="M0,4 V18 L9,11 Z" fill="#e6e6e6"/></svg>
<div class="abs" style="left:1351.9px;top:1556px;width:38.59999999999991px;height:37px;background:#545454;border-radius:0 7px 7px 0;"></div>
<svg style="left:1360.2px;top:1563.5px;" width="22" height="22" viewBox="0 0 22 22"><path d="M18.6,2.6 V19.4" stroke="#e6e6e6" stroke-width="3.2"/><path d="M3.4,2.4 V19.6 L15,11 Z" fill="#e6e6e6"/></svg>
<div class="abs" style="left:1935px;top:1555px;width:148px;height:39px;background:#545454;border-radius:8px;box-shadow:0 1px 1px rgba(0,0,0,.3);"></div>
<div class="num" style="left:1969px;top:1561px;color:#e6e6e6">86</div>
<div class="abs" style="left:2095.5px;top:1555px;width:385.0px;height:39px;background:#3a3a3a;border-radius:8px;"></div>
<div class="abs" style="left:2096.5px;top:1556px;width:35.5px;height:37px;background:#545454;border-radius:7px 0 0 7px;"></div>
<div class="abs" style="left:2133.5px;top:1556px;width:183.0px;height:37px;background:#545454;"></div>
<div class="abs" style="left:2318px;top:1556px;width:161.5px;height:37px;background:#545454;border-radius:0 7px 7px 0;"></div>
<svg style="left:2100px;top:1559px;" width="30" height="32" viewBox="0 0 30 32"><g fill="none" stroke="#e6e6e6" stroke-width="2.1"><circle cx="14" cy="17.6" r="11.4"/><path d="M14,10.6 V18.4 H19.4"/><path d="M9.6,1.6 H18.4 M14,1.6 V6"/><path d="M22.6,9 L26.4,5"/></g></svg>
<div class="t" style="left:2165.0px;top:1561px;">Inicio</div>
<div class="t" style="left:2277.6px;top:1561px;">1</div>
<div class="t" style="left:2350.0px;top:1561px;">Fin</div>
<div class="t" style="left:2413.2px;top:1561px;">250</div>
<div class="num" style="left:43.5px;top:1610px">0</div>
<div class="num" style="left:136.3px;top:1610px">10</div>
<div class="num" style="left:229.1px;top:1610px">20</div>
<div class="num" style="left:321.9px;top:1610px">30</div>
<div class="num" style="left:414.7px;top:1610px">40</div>
<div class="num" style="left:507.5px;top:1610px">50</div>
<div class="num" style="left:600.3px;top:1610px">60</div>
<div class="num" style="left:693.1px;top:1610px">70</div>
<div class="num" style="left:785.9px;top:1610px">80</div>
<div class="num" style="left:878.7px;top:1610px">90</div>
<div class="num" style="left:971.5px;top:1610px">100</div>
<div class="num" style="left:1064.3px;top:1610px">110</div>
<div class="num" style="left:1157.1px;top:1610px">120</div>
<div class="num" style="left:1249.9px;top:1610px">130</div>
<div class="num" style="left:1342.7px;top:1610px">140</div>
<div class="num" style="left:1435.5px;top:1610px">150</div>
<div class="num" style="left:1528.3px;top:1610px">160</div>
<div class="num" style="left:1621.1px;top:1610px">170</div>
<div class="num" style="left:1713.9px;top:1610px">180</div>
<div class="num" style="left:1806.7px;top:1610px">190</div>
<div class="num" style="left:1899.5px;top:1610px">200</div>
<div class="num" style="left:1992.3px;top:1610px">210</div>
<div class="num" style="left:2085.1px;top:1610px">220</div>
<div class="num" style="left:2177.9px;top:1610px">230</div>
<div class="num" style="left:2270.7px;top:1610px">240</div>
<div class="num" style="left:2363.5px;top:1610px">250</div>
<div class="abs" style="left:18px;top:1646.5px;width:2462px;height:16.5px;background:#545454;border-radius:8.5px;"></div>
<svg style="left:20px;top:1648px;" width="14" height="14" viewBox="0 0 14 14"><circle cx="7" cy="7" r="6" fill="#383838"/></svg>
<svg style="left:2465px;top:1648px;" width="14" height="14" viewBox="0 0 14 14"><circle cx="7" cy="7" r="6" fill="#383838"/></svg>
<div class="abs" style="left:880.5px;top:1636px;width:3.5px;height:31px;background:#4772b3;"></div>
<div class="abs" style="left:859px;top:1605.5px;width:47.5px;height:33.5px;background:#4772b3;border-radius:7px;"></div>
<div class="num" style="left:842.8px;top:1610px;color:#ffffff">86</div>
<svg style="left:0px;top:1629px;" width="14" height="24" viewBox="0 0 14 24"><path d="M2.5,5 L9,12 L2.5,19" fill="none" stroke="#8a8a8a" stroke-width="2.4"/></svg>
<div class="abs" style="left:2486px;top:1617px;width:8px;height:47px;background:#2c2c2c;border-radius:4px;"></div>
<svg style="left:2484px;top:1629px;" width="14" height="24" viewBox="0 0 14 24"><path d="M11,5 L4.5,12 L11,19" fill="none" stroke="#8a8a8a" stroke-width="2.4"/></svg>
<div id="sb"></div>
<svg style="left:23.6px;top:1677px;" width="23" height="30" viewBox="0 0 23 30"><path d="M11,1.2 H14.7 Q21.2,1.2 21.2,7.7 V21.7 Q21.2,28.2 14.7,28.2 H7.7 Q1.2,28.2 1.2,21.7 V13" fill="none" stroke="#8f8f8f" stroke-width="2"/><rect x="0" y="0" width="0" height="0" rx="6.5" fill="none" stroke="#8f8f8f" stroke-width="2"/><path d="M1.2,13 V7.7 Q1.2,1.2 7.7,1.2 H11 V13 Z" fill="#8f8f8f"/></svg>
<div class="t st" style="left:68.0px;top:1676px;">Seleccionar</div>
<svg style="left:512.8px;top:1677px;" width="23" height="30" viewBox="0 0 23 30"><rect x="1.2" y="1.2" width="20" height="27" rx="6.5" fill="none" stroke="#8f8f8f" stroke-width="2"/><rect x="8.6" y="4.6" width="5.2" height="9.6" rx="2.6" fill="#8f8f8f"/></svg>
<div class="t st" style="left:557.5px;top:1676px;">Rotar vista</div>
<svg style="left:1001.6px;top:1677px;" width="23" height="30" viewBox="0 0 23 30"><path d="M11.4,1.2 H7.7 Q1.2,1.2 1.2,7.7 V21.7 Q1.2,28.2 7.7,28.2 H14.7 Q21.2,28.2 21.2,21.7 V13" fill="none" stroke="#8f8f8f" stroke-width="2"/><rect x="0" y="0" width="0" height="0" rx="6.5" fill="none" stroke="#8f8f8f" stroke-width="2"/><path d="M21.2,13 V7.7 Q21.2,1.2 14.7,1.2 H11.4 V13 Z" fill="#8f8f8f"/></svg>
<div class="t st" style="left:1046.0px;top:1676px;">Objeto - menú contextual</div>
<div class="abs" style="left:1505.5px;top:1674px;width:500.0px;height:40px;background:#2f3f5e;border-radius:7px;"></div>
<div class="abs" style="left:1506.5px;top:1675px;width:50.0px;height:39px;background:#27437a;border-radius:6px 0 0 0;"></div>
<div class="abs" style="left:1557.5px;top:1675px;width:447.0px;height:39px;background:#1c2437;border-radius:0 6px 0 0;"></div>
<svg style="left:1516.5px;top:1677.5px;" width="30" height="32" viewBox="0 0 30 32"><path d="M4.6,0.6 H25.4 Q29.4,0.6 29.4,4.6 V20 Q29.4,24 25.4,24 H13 L6.4,30.6 V24 H4.6 Q0.6,24 0.6,20 V4.6 Q0.6,0.6 4.6,0.6 Z" fill="#ffffff"/><rect x="12.6" y="4.4" width="4.6" height="4.2" fill="#1c2437"/><path d="M10.4,10.6 H17.2 V18.4 H19.8 V20.8 H10.2 V18.4 H12.8 V13 H10.4 Z" fill="#1c2437"/></svg>
<div class="t" style="left:1565.0px;top:1676px;">Guardado "PLANOS_EXPO_RGB.blend"</div>
<div class="t" style="left:2800.5px;top:1676px;color:#8a8a8a;">3.6.2</div>

</div>
</body></html>
